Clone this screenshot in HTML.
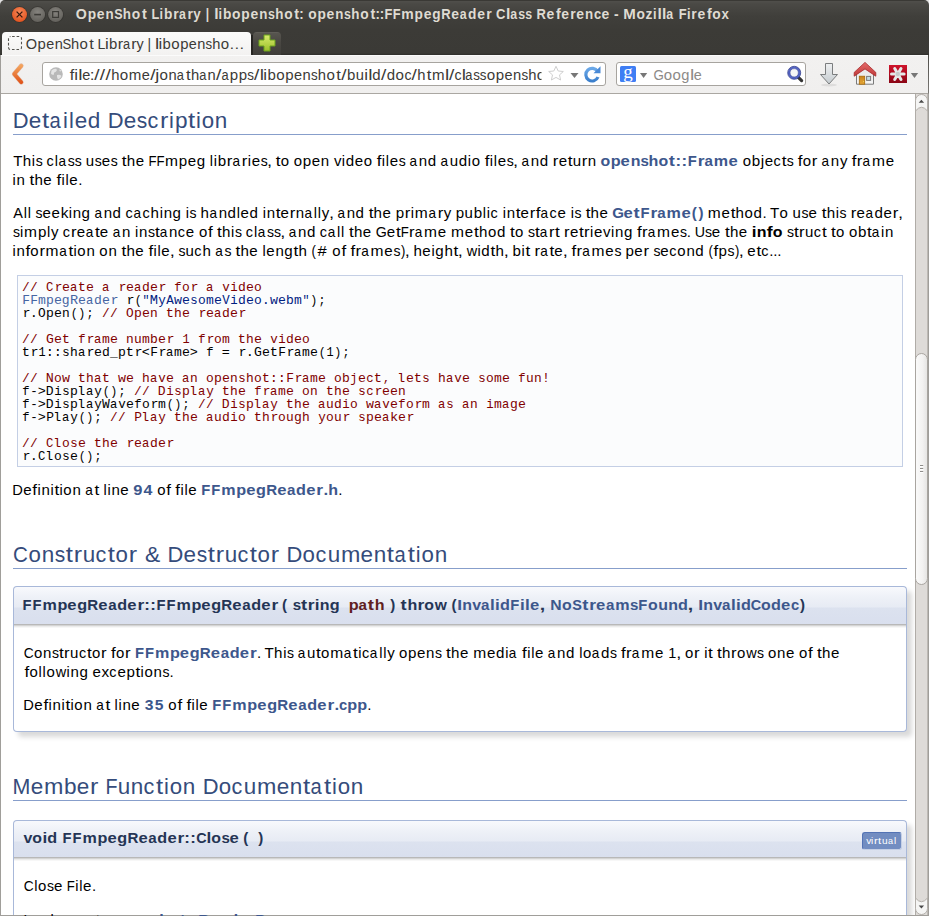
<!DOCTYPE html>
<html><head><meta charset="utf-8">
<title>OpenShot Library | libopenshot: openshot::FFmpegReader Class Reference</title>
<style>
html,body{margin:0;padding:0;width:929px;height:916px;overflow:hidden;background:#e2e2e2;}
#content{left:1px;top:94px;width:914px;height:821px;background:#fff;}
body{position:relative;font-family:"Liberation Sans",sans-serif;}
.abs{position:absolute;}
#titlebar{left:0;top:0;width:929px;height:56px;background:linear-gradient(#3a3935 0,#3a3935 1px,#504f4b 1px,#4a4945 4px,#403f3b 16px,#3c3b37 30px,#3b3a36 53px,#2f2e2b 55px);border-radius:5px 5px 0 0;}
#tab{left:2px;top:32px;width:248.5px;height:24px;background:linear-gradient(#fbfbfa,#f2f1f0);border-radius:4px 4px 0 0;}
#newtab{left:253px;top:32px;width:28px;height:23px;background:linear-gradient(#67655f 0,#57554f 1px,#4a4843 45%,#3f3e3a);border-radius:4px 4px 0 0;}
#tabsep{left:250.5px;top:35px;width:2px;height:20px;background:#262522;border-radius:0 0 0 2px;}
#navbar{left:0;top:55px;width:929px;height:38px;background:linear-gradient(#fbfbfb 0,#fbfbfb 1px,#f2f1f0 1px,#f0efee 38px);}
#navline{left:0;top:93px;width:929px;height:1px;background:#aaa7a2;}
#url{left:42px;top:62px;width:562px;height:22px;background:#fff;border:1px solid #a7a49f;border-radius:3px;overflow:hidden;}
#search{left:616px;top:62px;width:188px;height:22px;background:#fff;border:1px solid #a7a49f;border-radius:3px;}
#leftborder{left:0;top:55px;width:1px;height:861px;background:#a09e9a;}
#rightborder{left:928px;top:55px;width:1px;height:861px;background:linear-gradient(#4e4d49 0,#7a7874 38px,#a09e9a 39px);}
#bottomborder{left:0;top:915px;width:929px;height:1px;background:#a09e9a;}
#sbtrack{left:915px;top:94px;width:13px;height:821px;background:#dedbd8;border-left:1px solid #aeaaa5;}
.h2line{position:absolute;left:13px;width:894px;height:1px;background:#879ecb;}
#frag{left:17px;top:275px;width:884px;height:190px;background:#fbfcfd;border:1px solid #c4cfe5;}
.memproto{position:absolute;left:13px;width:892px;border:1px solid #a8b8d9;border-bottom:none;border-radius:4px 4px 0 0;
 background:linear-gradient(#f8f9fc 0px,#eef1f7 10px,#e7ebf4 20px,#dce2ef 21px,#d9dfee 37px);box-shadow:5px 5px 5px rgba(0,0,0,0.15);}
.pshadow{position:absolute;left:14px;width:892px;height:4px;background:linear-gradient(rgba(0,0,0,0.28) 0px,rgba(0,0,0,0.28) 1px,rgba(0,0,0,0.17) 1px,rgba(0,0,0,0.17) 2px,rgba(0,0,0,0.08) 2px,rgba(0,0,0,0.08) 3px,rgba(0,0,0,0.03) 3px,rgba(0,0,0,0.03) 4px);}
.memdoc{position:absolute;left:13px;width:892px;border:1px solid #a8b8d9;border-top:none;border-radius:0 0 4px 4px;
 background:#fff;box-shadow:5px 5px 5px rgba(0,0,0,0.15);}
#overlay{position:absolute;left:0;top:0;}
</style></head><body>
<div id="content" class="abs"></div>
<div id="titlebar" class="abs"></div>
<div id="tab" class="abs"></div>
<div id="newtab" class="abs"></div>
<div id="tabsep" class="abs"></div>
<div id="navbar" class="abs"></div>
<div id="navline" class="abs"></div>
<div id="url" class="abs"></div>
<div id="search" class="abs"></div>
<div id="sbtrack" class="abs"></div>
<div class="h2line" style="top:134px"></div>
<div id="frag" class="abs"></div>
<div class="h2line" style="top:568px"></div>
<div class="memproto" style="top:586px;height:37px"></div>
<div class="memdoc" style="top:624px;height:107px"></div>
<div class="pshadow" style="top:624px"></div>
<div class="h2line" style="top:800px"></div>
<div class="memproto" style="top:820px;height:36px"></div>
<div class="memdoc" style="top:857px;height:100px"></div>
<div class="pshadow" style="top:857px"></div>
<div class="abs" style="left:862px;top:832px;width:38px;height:15.5px;background:#728dc1;border-top:1px solid #5373b4;border-left:1px solid #5373b4;border-right:1px solid #c4cfe5;border-bottom:1px solid #c4cfe5;border-radius:3px;"></div>
<div id="leftborder" class="abs"></div>
<div id="rightborder" class="abs"></div>
<div id="bottomborder" class="abs"></div>

<svg id="overlay" width="929" height="916" viewBox="0 0 929 916">
<defs>
 <radialGradient id="gClose" cx="50%" cy="35%" r="65%"><stop offset="0" stop-color="#f7895a"/><stop offset="1" stop-color="#e2531f"/></radialGradient>
 <radialGradient id="gGray" cx="50%" cy="35%" r="65%"><stop offset="0" stop-color="#85837e"/><stop offset="1" stop-color="#62605b"/></radialGradient>
 <linearGradient id="gPlus" x1="0" y1="0" x2="0" y2="1"><stop offset="0" stop-color="#d9ec6e"/><stop offset="1" stop-color="#9cbf2a"/></linearGradient>
 <linearGradient id="gBack" x1="0" y1="0" x2="0" y2="1"><stop offset="0" stop-color="#f3a35c"/><stop offset="1" stop-color="#e0561c"/></linearGradient>
 <linearGradient id="gReload" x1="0" y1="0" x2="0" y2="1"><stop offset="0" stop-color="#6aa8e8"/><stop offset="1" stop-color="#3b7fcc"/></linearGradient>
 <linearGradient id="gArrow" x1="0" y1="0" x2="0" y2="1"><stop offset="0" stop-color="#eef0f1"/><stop offset="1" stop-color="#c5cbcf"/></linearGradient>
 <linearGradient id="gRed" x1="0" y1="0" x2="0" y2="1"><stop offset="0" stop-color="#d0142c"/><stop offset="1" stop-color="#8a0414"/></linearGradient>
 <linearGradient id="gRoof" x1="0" y1="0" x2="0" y2="1"><stop offset="0" stop-color="#e46a6a"/><stop offset="1" stop-color="#c03a3a"/></linearGradient>
</defs>
<!-- window buttons -->
<circle cx="19.5" cy="14.5" r="8.3" fill="#2e2d2a" opacity="0.6"/>
<circle cx="19.5" cy="14.5" r="7.5" fill="url(#gClose)"/>
<path d="M16.6 11.6 L22.4 17.4 M22.4 11.6 L16.6 17.4" stroke="#3a1a0e" stroke-width="1.3"/>
<circle cx="37.6" cy="14.5" r="8.3" fill="#2e2d2a" opacity="0.6"/>
<circle cx="37.6" cy="14.5" r="7.5" fill="url(#gGray)"/>
<rect x="34.2" y="13.8" width="6.8" height="1.6" fill="#3c3b37"/>
<circle cx="55.6" cy="14.5" r="8.3" fill="#2e2d2a" opacity="0.6"/>
<circle cx="55.6" cy="14.5" r="7.5" fill="url(#gGray)"/>
<rect x="52.7" y="11.6" width="5.8" height="5.8" fill="none" stroke="#3c3b37" stroke-width="1.2"/>
<!-- tab icon: dashed square -->
<rect x="8.5" y="36.5" width="13" height="13" rx="2" fill="none" stroke="#55544f" stroke-width="1.1" stroke-dasharray="2.6 1.9" stroke-dashoffset="-1.6"/>
<!-- new tab plus -->
<path d="M264 35 h6 v5 h5 v6 h-5 v5 h-6 v-5 h-5 v-6 h5 z" fill="url(#gPlus)" stroke="#6aa21c" stroke-width="1"/>
<!-- back chevron -->
<path d="M21.3 65.8 L14.2 74 L21.3 82.2" fill="none" stroke="#c9561e" stroke-opacity="0.35" stroke-width="4.6" stroke-linecap="round" stroke-linejoin="round"/><path d="M21.3 65.8 L14.2 74 L21.3 82.2" fill="none" stroke="url(#gBack)" stroke-width="3.6" stroke-linecap="round" stroke-linejoin="round"/>
<!-- globe -->
<circle cx="56" cy="74" r="6.8" fill="#b9b9b9"/>
<path d="M51.5 70.5 q2.5-2.5 5-1.5 q1 2 -1 3 q-2 0 -1.5 2.5 q-2 1 -3 -1z M57 75 q3 -1 4.5 1 q-1 3 -3.5 3.5 q-1.5-2 -1-4.5z M59 69.5 q1.5 0 2.5 1.5 l-1.5 0.5z" fill="#e4e4e4"/>
<!-- star -->
<path d="M556 66.3 L558.2 71 L563.3 71.5 L559.5 74.9 L560.6 80 L556 77.4 L551.4 80 L552.5 74.9 L548.7 71.5 L553.8 71 Z" fill="#fff" stroke="#cfcfcf" stroke-width="1"/>
<!-- dropdown url -->
<path d="M570.5 73 h8 l-4 5 z" fill="#777"/>
<!-- reload -->
<path d="M597.6 71.5 A6.3 6.3 0 1 0 598 77" fill="none" stroke="url(#gReload)" stroke-width="3.2"/>
<path d="M600.5 66.2 L600.5 73.2 L593.5 73.2 Z" fill="#4a8ad6"/>
<!-- google icon -->
<rect x="620" y="66" width="16" height="16" rx="1.5" fill="#3f7ef4"/>
<text x="628" y="77.5" font-family="Liberation Serif" font-size="19" fill="#fff" text-anchor="middle">g</text>
<path d="M640 73 h7.2 l-3.6 5 z" fill="#777"/>
<!-- magnifier -->
<line x1="797.8" y1="76.8" x2="801.6" y2="80.6" stroke="#333" stroke-width="3.2" stroke-linecap="round"/>
<circle cx="794.2" cy="72.8" r="5.3" fill="#f6f6f6" stroke="#5565c4" stroke-width="2.2"/>
<circle cx="794.2" cy="72.8" r="6.5" fill="none" stroke="#2e3a8c" stroke-width="0.8"/>
<circle cx="794.2" cy="72.8" r="4.1" fill="none" stroke="#2e3a8c" stroke-width="0.5"/>
<!-- download arrow -->
<ellipse cx="829" cy="85" rx="8" ry="1.5" fill="#000" opacity="0.08"/>
<path d="M825.5 63.5 h7 v11 h5 l-8.5 9.5 l-8.5 -9.5 h5 z" fill="url(#gArrow)" stroke="#7b7d7e" stroke-width="1"/>
<!-- home -->
<defs><linearGradient id="gDoor" x1="0" y1="0" x2="0" y2="1"><stop offset="0" stop-color="#c8821a"/><stop offset="1" stop-color="#e6a83a"/></linearGradient>
<linearGradient id="gBody" x1="0" y1="0" x2="0" y2="1"><stop offset="0" stop-color="#e4e4e4"/><stop offset="1" stop-color="#f6f6f6"/></linearGradient></defs>
<path d="M856.5 73 L865 66 L873.5 73 L873.5 84.2 L856.5 84.2 Z" fill="url(#gBody)" stroke="#7a7a7a" stroke-width="1"/>
<rect x="859.3" y="76.2" width="5.4" height="8" fill="url(#gDoor)" stroke="#a86a08" stroke-width="0.8"/>
<circle cx="863.5" cy="81.5" r="0.5" fill="#f0e060"/>
<rect x="866.6" y="76.4" width="4" height="4" fill="#c4dce4" stroke="#7a7a7a" stroke-width="1"/>
<path d="M854.2 72.4 L865 62.4 L875.8 72.4 L875.8 76.2 L865 68.9 L854.2 76.2 Z" fill="url(#gRoof)" stroke="#a82828" stroke-width="0.8" stroke-linejoin="round"/>
<!-- red addon -->
<rect x="889" y="65" width="18" height="18" fill="url(#gRed)"/>
<path d="M891.5 74 h12.6 M894.7 68.5 l6.3 11 M901 68.5 l-6.3 11" stroke="#e6eaea" stroke-width="3" stroke-linecap="round"/><circle cx="897.8" cy="74" r="2.2" fill="#c8cccc"/>
<path d="M910.8 73 h7.4 l-3.7 5 z" fill="#777"/>
<!-- scrollbar -->
<defs>
 <linearGradient id="gThumb" x1="0" y1="0" x2="1" y2="0"><stop offset="0" stop-color="#fafafa"/><stop offset="0.6" stop-color="#f3f2f1"/><stop offset="1" stop-color="#e4e3e1"/></linearGradient>
</defs>
<rect x="915" y="94" width="13" height="821" fill="#dedbd8"/>
<rect x="915" y="94" width="1" height="821" fill="#b0aca7"/>
<rect x="927" y="94" width="1" height="821" fill="#bdb9b4"/>
<path d="M915.5 111 L915.5 100.5 A6 6 0 0 1 927.5 100.5 L927.5 111 Q921.5 103.5 915.5 111 Z" fill="#f5f5f4" stroke="#b3afaa" stroke-width="1"/>
<path d="M918.7 102.8 L921.4 99.8 L924.1 102.8 Z" fill="#4a4a4a"/>
<path d="M915.5 898 L915.5 908.5 A6 6 0 0 0 927.5 908.5 L927.5 898 Q921.5 905.5 915.5 898 Z" fill="#f5f5f4" stroke="#b3afaa" stroke-width="1"/>
<path d="M918.7 905.5 L921.4 908.5 L924.1 905.5 Z" fill="#4a4a4a"/>
<rect x="915.5" y="353.5" width="12" height="231" rx="6" ry="6" fill="url(#gThumb)" stroke="#a9a5a0" stroke-width="1"/>
<rect x="920" y="465" width="3.2" height="1" fill="#8f8d8a"/>
<rect x="920" y="466" width="3.2" height="1" fill="#ffffff"/>
<rect x="920" y="468" width="3.2" height="1" fill="#8f8d8a"/>
<rect x="920" y="469" width="3.2" height="1" fill="#ffffff"/>
<rect x="920" y="471" width="3.2" height="1" fill="#8f8d8a"/>
<rect x="920" y="472" width="3.2" height="1" fill="#ffffff"/>

<text y="19.15" font-family="Liberation Sans" font-size="15.0" font-weight="bold" fill="#dfdbd2"><tspan x="75.73" textLength="11.04" lengthAdjust="spacingAndGlyphs">O</tspan><tspan x="87.69" textLength="8.39" lengthAdjust="spacingAndGlyphs">p</tspan><tspan x="96.86" textLength="7.76" lengthAdjust="spacingAndGlyphs">e</tspan><tspan x="105.59" textLength="8.17" lengthAdjust="spacingAndGlyphs">n</tspan><tspan x="114.16" textLength="8.40" lengthAdjust="spacingAndGlyphs">S</tspan><tspan x="122.86" textLength="8.20" lengthAdjust="spacingAndGlyphs">h</tspan><tspan x="131.86" textLength="8.42" lengthAdjust="spacingAndGlyphs">o</tspan><tspan x="141.96" textLength="4.81" lengthAdjust="spacingAndGlyphs">t</tspan> <tspan x="151.55" textLength="7.83" lengthAdjust="spacingAndGlyphs">L</tspan><tspan x="159.60" textLength="3.53" lengthAdjust="spacingAndGlyphs">i</tspan><tspan x="163.94" textLength="8.39" lengthAdjust="spacingAndGlyphs">b</tspan><tspan x="173.23" textLength="5.46" lengthAdjust="spacingAndGlyphs">r</tspan><tspan x="179.10" textLength="6.87" lengthAdjust="spacingAndGlyphs">a</tspan><tspan x="187.62" textLength="5.46" lengthAdjust="spacingAndGlyphs">r</tspan><tspan x="193.26" textLength="7.44" lengthAdjust="spacingAndGlyphs">y</tspan> <tspan x="205.66" textLength="3.36" lengthAdjust="spacingAndGlyphs">|</tspan> <tspan x="214.19" textLength="4.34" lengthAdjust="spacingAndGlyphs">l</tspan><tspan x="218.58" textLength="3.53" lengthAdjust="spacingAndGlyphs">i</tspan><tspan x="222.92" textLength="8.39" lengthAdjust="spacingAndGlyphs">b</tspan><tspan x="232.05" textLength="8.42" lengthAdjust="spacingAndGlyphs">o</tspan><tspan x="241.32" textLength="8.39" lengthAdjust="spacingAndGlyphs">p</tspan><tspan x="250.49" textLength="7.76" lengthAdjust="spacingAndGlyphs">e</tspan><tspan x="259.22" textLength="8.17" lengthAdjust="spacingAndGlyphs">n</tspan><tspan x="267.88" textLength="6.91" lengthAdjust="spacingAndGlyphs">s</tspan><tspan x="275.19" textLength="8.20" lengthAdjust="spacingAndGlyphs">h</tspan><tspan x="284.19" textLength="8.42" lengthAdjust="spacingAndGlyphs">o</tspan><tspan x="294.29" textLength="4.81" lengthAdjust="spacingAndGlyphs">t</tspan><tspan x="299.35" textLength="4.43" lengthAdjust="spacingAndGlyphs">:</tspan> <tspan x="308.14" textLength="8.42" lengthAdjust="spacingAndGlyphs">o</tspan><tspan x="317.41" textLength="8.39" lengthAdjust="spacingAndGlyphs">p</tspan><tspan x="326.58" textLength="7.76" lengthAdjust="spacingAndGlyphs">e</tspan><tspan x="335.31" textLength="8.17" lengthAdjust="spacingAndGlyphs">n</tspan><tspan x="343.97" textLength="6.91" lengthAdjust="spacingAndGlyphs">s</tspan><tspan x="351.28" textLength="8.20" lengthAdjust="spacingAndGlyphs">h</tspan><tspan x="360.28" textLength="8.42" lengthAdjust="spacingAndGlyphs">o</tspan><tspan x="370.38" textLength="4.81" lengthAdjust="spacingAndGlyphs">t</tspan><tspan x="375.44" textLength="4.43" lengthAdjust="spacingAndGlyphs">:</tspan><tspan x="379.73" textLength="4.43" lengthAdjust="spacingAndGlyphs">:</tspan><tspan x="384.52" textLength="7.89" lengthAdjust="spacingAndGlyphs">F</tspan><tspan x="392.86" textLength="7.89" lengthAdjust="spacingAndGlyphs">F</tspan><tspan x="401.18" textLength="12.46" lengthAdjust="spacingAndGlyphs">m</tspan><tspan x="414.47" textLength="8.39" lengthAdjust="spacingAndGlyphs">p</tspan><tspan x="423.64" textLength="7.76" lengthAdjust="spacingAndGlyphs">e</tspan><tspan x="432.28" textLength="8.28" lengthAdjust="spacingAndGlyphs">g</tspan><tspan x="441.35" textLength="9.39" lengthAdjust="spacingAndGlyphs">R</tspan><tspan x="451.19" textLength="7.76" lengthAdjust="spacingAndGlyphs">e</tspan><tspan x="459.70" textLength="6.87" lengthAdjust="spacingAndGlyphs">a</tspan><tspan x="468.03" textLength="8.38" lengthAdjust="spacingAndGlyphs">d</tspan><tspan x="477.29" textLength="7.76" lengthAdjust="spacingAndGlyphs">e</tspan><tspan x="486.14" textLength="5.46" lengthAdjust="spacingAndGlyphs">r</tspan> <tspan x="496.12" textLength="9.38" lengthAdjust="spacingAndGlyphs">C</tspan><tspan x="505.95" textLength="4.34" lengthAdjust="spacingAndGlyphs">l</tspan><tspan x="510.18" textLength="6.87" lengthAdjust="spacingAndGlyphs">a</tspan><tspan x="518.23" textLength="6.91" lengthAdjust="spacingAndGlyphs">s</tspan><tspan x="525.25" textLength="6.91" lengthAdjust="spacingAndGlyphs">s</tspan> <tspan x="536.57" textLength="9.39" lengthAdjust="spacingAndGlyphs">R</tspan><tspan x="546.41" textLength="7.76" lengthAdjust="spacingAndGlyphs">e</tspan><tspan x="555.96" textLength="4.74" lengthAdjust="spacingAndGlyphs">f</tspan><tspan x="561.37" textLength="7.76" lengthAdjust="spacingAndGlyphs">e</tspan><tspan x="570.22" textLength="5.46" lengthAdjust="spacingAndGlyphs">r</tspan><tspan x="576.31" textLength="7.76" lengthAdjust="spacingAndGlyphs">e</tspan><tspan x="585.04" textLength="8.17" lengthAdjust="spacingAndGlyphs">n</tspan><tspan x="593.91" textLength="7.18" lengthAdjust="spacingAndGlyphs">c</tspan><tspan x="601.50" textLength="7.76" lengthAdjust="spacingAndGlyphs">e</tspan> <tspan x="613.97" textLength="4.66" lengthAdjust="spacingAndGlyphs">-</tspan> <tspan x="623.19" textLength="12.51" lengthAdjust="spacingAndGlyphs">M</tspan><tspan x="636.50" textLength="8.42" lengthAdjust="spacingAndGlyphs">o</tspan><tspan x="645.51" textLength="6.94" lengthAdjust="spacingAndGlyphs">z</tspan><tspan x="653.07" textLength="3.53" lengthAdjust="spacingAndGlyphs">i</tspan><tspan x="657.44" textLength="4.34" lengthAdjust="spacingAndGlyphs">l</tspan><tspan x="661.96" textLength="4.34" lengthAdjust="spacingAndGlyphs">l</tspan><tspan x="666.19" textLength="6.87" lengthAdjust="spacingAndGlyphs">a</tspan> <tspan x="678.63" textLength="7.89" lengthAdjust="spacingAndGlyphs">F</tspan><tspan x="686.91" textLength="3.53" lengthAdjust="spacingAndGlyphs">i</tspan><tspan x="691.34" textLength="5.46" lengthAdjust="spacingAndGlyphs">r</tspan><tspan x="697.43" textLength="7.76" lengthAdjust="spacingAndGlyphs">e</tspan><tspan x="706.98" textLength="4.74" lengthAdjust="spacingAndGlyphs">f</tspan><tspan x="712.36" textLength="8.42" lengthAdjust="spacingAndGlyphs">o</tspan><tspan x="721.51" textLength="7.38" lengthAdjust="spacingAndGlyphs">x</tspan></text>
<text y="48.65" font-family="Liberation Sans" font-size="14.75" fill="#3c3b37"><tspan x="25.84" textLength="11.34" lengthAdjust="spacingAndGlyphs">O</tspan><tspan x="37.63" textLength="8.30" lengthAdjust="spacingAndGlyphs">p</tspan><tspan x="46.22" textLength="8.02" lengthAdjust="spacingAndGlyphs">e</tspan><tspan x="54.63" textLength="8.13" lengthAdjust="spacingAndGlyphs">n</tspan><tspan x="62.51" textLength="8.71" lengthAdjust="spacingAndGlyphs">S</tspan><tspan x="71.02" textLength="8.17" lengthAdjust="spacingAndGlyphs">h</tspan><tspan x="79.57" textLength="8.37" lengthAdjust="spacingAndGlyphs">o</tspan><tspan x="89.23" textLength="4.58" lengthAdjust="spacingAndGlyphs">t</tspan> <tspan x="97.54" textLength="7.88" lengthAdjust="spacingAndGlyphs">L</tspan><tspan x="105.08" textLength="3.74" lengthAdjust="spacingAndGlyphs">i</tspan><tspan x="109.06" textLength="8.30" lengthAdjust="spacingAndGlyphs">b</tspan><tspan x="117.82" textLength="5.39" lengthAdjust="spacingAndGlyphs">r</tspan><tspan x="123.01" textLength="7.10" lengthAdjust="spacingAndGlyphs">a</tspan><tspan x="131.22" textLength="5.39" lengthAdjust="spacingAndGlyphs">r</tspan><tspan x="136.49" textLength="7.16" lengthAdjust="spacingAndGlyphs">y</tspan> <tspan x="147.49" textLength="3.60" lengthAdjust="spacingAndGlyphs">|</tspan> <tspan x="155.00" textLength="4.26" lengthAdjust="spacingAndGlyphs">l</tspan><tspan x="158.64" textLength="3.74" lengthAdjust="spacingAndGlyphs">i</tspan><tspan x="162.62" textLength="8.30" lengthAdjust="spacingAndGlyphs">b</tspan><tspan x="171.30" textLength="8.37" lengthAdjust="spacingAndGlyphs">o</tspan><tspan x="180.17" textLength="8.30" lengthAdjust="spacingAndGlyphs">p</tspan><tspan x="188.77" textLength="8.02" lengthAdjust="spacingAndGlyphs">e</tspan><tspan x="197.18" textLength="8.13" lengthAdjust="spacingAndGlyphs">n</tspan><tspan x="205.48" textLength="6.63" lengthAdjust="spacingAndGlyphs">s</tspan><tspan x="212.21" textLength="8.17" lengthAdjust="spacingAndGlyphs">h</tspan><tspan x="220.77" textLength="8.37" lengthAdjust="spacingAndGlyphs">o</tspan><tspan x="228.98" textLength="15.68" lengthAdjust="spacingAndGlyphs">…</tspan></text>
<defs><clipPath id="urlclip"><rect x="60" y="60" width="481.5" height="30"/></clipPath></defs><g clip-path="url(#urlclip)">
<text y="79.65" font-family="Liberation Sans" font-size="14.75" fill="#3c3b37"><tspan x="69.70" textLength="4.54" lengthAdjust="spacingAndGlyphs">f</tspan><tspan x="74.30" textLength="3.77" lengthAdjust="spacingAndGlyphs">i</tspan><tspan x="78.30" textLength="4.26" lengthAdjust="spacingAndGlyphs">l</tspan><tspan x="82.15" textLength="8.09" lengthAdjust="spacingAndGlyphs">e</tspan><tspan x="89.88" textLength="4.80" lengthAdjust="spacingAndGlyphs">:</tspan><tspan x="94.29" textLength="5.33" lengthAdjust="spacingAndGlyphs">/</tspan><tspan x="99.89" textLength="5.33" lengthAdjust="spacingAndGlyphs">/</tspan><tspan x="105.49" textLength="5.33" lengthAdjust="spacingAndGlyphs">/</tspan><tspan x="111.19" textLength="8.24" lengthAdjust="spacingAndGlyphs">h</tspan><tspan x="119.87" textLength="8.44" lengthAdjust="spacingAndGlyphs">o</tspan><tspan x="128.87" textLength="12.57" lengthAdjust="spacingAndGlyphs">m</tspan><tspan x="141.83" textLength="8.09" lengthAdjust="spacingAndGlyphs">e</tspan><tspan x="150.22" textLength="5.33" lengthAdjust="spacingAndGlyphs">/</tspan><tspan x="155.35" textLength="4.03" lengthAdjust="spacingAndGlyphs">j</tspan><tspan x="159.61" textLength="8.44" lengthAdjust="spacingAndGlyphs">o</tspan><tspan x="168.57" textLength="8.20" lengthAdjust="spacingAndGlyphs">n</tspan><tspan x="176.80" textLength="7.16" lengthAdjust="spacingAndGlyphs">a</tspan><tspan x="185.92" textLength="4.63" lengthAdjust="spacingAndGlyphs">t</tspan><tspan x="191.02" textLength="8.24" lengthAdjust="spacingAndGlyphs">h</tspan><tspan x="199.30" textLength="7.16" lengthAdjust="spacingAndGlyphs">a</tspan><tspan x="207.58" textLength="8.20" lengthAdjust="spacingAndGlyphs">n</tspan><tspan x="216.12" textLength="5.33" lengthAdjust="spacingAndGlyphs">/</tspan><tspan x="221.41" textLength="7.16" lengthAdjust="spacingAndGlyphs">a</tspan><tspan x="229.74" textLength="8.37" lengthAdjust="spacingAndGlyphs">p</tspan><tspan x="238.65" textLength="8.37" lengthAdjust="spacingAndGlyphs">p</tspan><tspan x="247.23" textLength="6.69" lengthAdjust="spacingAndGlyphs">s</tspan><tspan x="253.96" textLength="5.33" lengthAdjust="spacingAndGlyphs">/</tspan><tspan x="259.71" textLength="4.26" lengthAdjust="spacingAndGlyphs">l</tspan><tspan x="263.39" textLength="3.77" lengthAdjust="spacingAndGlyphs">i</tspan><tspan x="267.44" textLength="8.37" lengthAdjust="spacingAndGlyphs">b</tspan><tspan x="276.25" textLength="8.44" lengthAdjust="spacingAndGlyphs">o</tspan><tspan x="285.25" textLength="8.37" lengthAdjust="spacingAndGlyphs">p</tspan><tspan x="293.97" textLength="8.09" lengthAdjust="spacingAndGlyphs">e</tspan><tspan x="302.50" textLength="8.20" lengthAdjust="spacingAndGlyphs">n</tspan><tspan x="310.93" textLength="6.69" lengthAdjust="spacingAndGlyphs">s</tspan><tspan x="317.76" textLength="8.24" lengthAdjust="spacingAndGlyphs">h</tspan><tspan x="326.44" textLength="8.44" lengthAdjust="spacingAndGlyphs">o</tspan><tspan x="336.23" textLength="4.63" lengthAdjust="spacingAndGlyphs">t</tspan><tspan x="341.23" textLength="5.33" lengthAdjust="spacingAndGlyphs">/</tspan><tspan x="347.03" textLength="8.37" lengthAdjust="spacingAndGlyphs">b</tspan><tspan x="355.81" textLength="8.20" lengthAdjust="spacingAndGlyphs">u</tspan><tspan x="364.27" textLength="3.77" lengthAdjust="spacingAndGlyphs">i</tspan><tspan x="368.28" textLength="4.26" lengthAdjust="spacingAndGlyphs">l</tspan><tspan x="372.19" textLength="8.36" lengthAdjust="spacingAndGlyphs">d</tspan><tspan x="381.02" textLength="5.33" lengthAdjust="spacingAndGlyphs">/</tspan><tspan x="386.69" textLength="8.36" lengthAdjust="spacingAndGlyphs">d</tspan><tspan x="395.62" textLength="8.44" lengthAdjust="spacingAndGlyphs">o</tspan><tspan x="404.40" textLength="7.08" lengthAdjust="spacingAndGlyphs">c</tspan><tspan x="411.50" textLength="5.33" lengthAdjust="spacingAndGlyphs">/</tspan><tspan x="417.21" textLength="8.24" lengthAdjust="spacingAndGlyphs">h</tspan><tspan x="426.77" textLength="4.63" lengthAdjust="spacingAndGlyphs">t</tspan><tspan x="431.96" textLength="12.57" lengthAdjust="spacingAndGlyphs">m</tspan><tspan x="445.06" textLength="4.26" lengthAdjust="spacingAndGlyphs">l</tspan><tspan x="448.90" textLength="5.33" lengthAdjust="spacingAndGlyphs">/</tspan><tspan x="454.48" textLength="7.08" lengthAdjust="spacingAndGlyphs">c</tspan><tspan x="461.73" textLength="4.26" lengthAdjust="spacingAndGlyphs">l</tspan><tspan x="465.25" textLength="7.16" lengthAdjust="spacingAndGlyphs">a</tspan><tspan x="473.27" textLength="6.69" lengthAdjust="spacingAndGlyphs">s</tspan><tspan x="479.87" textLength="6.69" lengthAdjust="spacingAndGlyphs">s</tspan><tspan x="486.69" textLength="8.44" lengthAdjust="spacingAndGlyphs">o</tspan><tspan x="495.70" textLength="8.37" lengthAdjust="spacingAndGlyphs">p</tspan><tspan x="504.42" textLength="8.09" lengthAdjust="spacingAndGlyphs">e</tspan><tspan x="512.95" textLength="8.20" lengthAdjust="spacingAndGlyphs">n</tspan><tspan x="521.38" textLength="6.69" lengthAdjust="spacingAndGlyphs">s</tspan><tspan x="528.21" textLength="8.24" lengthAdjust="spacingAndGlyphs">h</tspan><tspan x="536.89" textLength="8.44" lengthAdjust="spacingAndGlyphs">o</tspan><tspan x="546.68" textLength="4.63" lengthAdjust="spacingAndGlyphs">t</tspan><tspan x="551.48" textLength="7.67" lengthAdjust="spacingAndGlyphs">_</tspan><tspan x="559.09" textLength="6.56" lengthAdjust="spacingAndGlyphs">1</tspan><tspan x="567.53" textLength="7.67" lengthAdjust="spacingAndGlyphs">_</tspan><tspan x="575.15" textLength="6.56" lengthAdjust="spacingAndGlyphs">1</tspan></text>
</g>
<text y="80.15" font-family="Liberation Sans" font-size="14.75" fill="#8c8a87"><tspan x="653.49" textLength="10.36" lengthAdjust="spacingAndGlyphs">G</tspan><tspan x="663.73" textLength="8.37" lengthAdjust="spacingAndGlyphs">o</tspan><tspan x="672.51" textLength="8.37" lengthAdjust="spacingAndGlyphs">o</tspan><tspan x="681.24" textLength="8.18" lengthAdjust="spacingAndGlyphs">g</tspan><tspan x="689.96" textLength="4.26" lengthAdjust="spacingAndGlyphs">l</tspan><tspan x="693.76" textLength="8.02" lengthAdjust="spacingAndGlyphs">e</tspan></text>
<text y="127.75" font-family="Liberation Sans" font-size="22" fill="#354c7b"><tspan x="12.64" textLength="15.83" lengthAdjust="spacingAndGlyphs">D</tspan><tspan x="28.69" textLength="12.51" lengthAdjust="spacingAndGlyphs">e</tspan><tspan x="41.91" textLength="7.15" lengthAdjust="spacingAndGlyphs">t</tspan><tspan x="49.50" textLength="11.24" lengthAdjust="spacingAndGlyphs">a</tspan><tspan x="62.95" textLength="4.84" lengthAdjust="spacingAndGlyphs">i</tspan><tspan x="68.94" textLength="4.84" lengthAdjust="spacingAndGlyphs">l</tspan><tspan x="74.69" textLength="12.51" lengthAdjust="spacingAndGlyphs">e</tspan><tspan x="87.70" textLength="12.56" lengthAdjust="spacingAndGlyphs">d</tspan> <tspan x="107.64" textLength="15.83" lengthAdjust="spacingAndGlyphs">D</tspan><tspan x="123.69" textLength="12.51" lengthAdjust="spacingAndGlyphs">e</tspan><tspan x="136.81" textLength="10.48" lengthAdjust="spacingAndGlyphs">s</tspan><tspan x="147.58" textLength="10.77" lengthAdjust="spacingAndGlyphs">c</tspan><tspan x="159.92" textLength="8.34" lengthAdjust="spacingAndGlyphs">r</tspan><tspan x="168.95" textLength="4.84" lengthAdjust="spacingAndGlyphs">i</tspan><tspan x="174.95" textLength="12.57" lengthAdjust="spacingAndGlyphs">p</tspan><tspan x="187.91" textLength="7.15" lengthAdjust="spacingAndGlyphs">t</tspan><tspan x="195.95" textLength="4.84" lengthAdjust="spacingAndGlyphs">i</tspan><tspan x="201.67" textLength="12.39" lengthAdjust="spacingAndGlyphs">o</tspan><tspan x="214.89" textLength="12.50" lengthAdjust="spacingAndGlyphs">n</tspan></text>
<text y="562.15" font-family="Liberation Sans" font-size="22" fill="#354c7b"><tspan x="13.11" textLength="14.87" lengthAdjust="spacingAndGlyphs">C</tspan><tspan x="28.55" textLength="12.39" lengthAdjust="spacingAndGlyphs">o</tspan><tspan x="41.77" textLength="12.50" lengthAdjust="spacingAndGlyphs">n</tspan><tspan x="54.69" textLength="10.48" lengthAdjust="spacingAndGlyphs">s</tspan><tspan x="65.79" textLength="7.15" lengthAdjust="spacingAndGlyphs">t</tspan><tspan x="73.80" textLength="8.34" lengthAdjust="spacingAndGlyphs">r</tspan><tspan x="82.68" textLength="12.50" lengthAdjust="spacingAndGlyphs">u</tspan><tspan x="95.47" textLength="10.77" lengthAdjust="spacingAndGlyphs">c</tspan><tspan x="107.79" textLength="7.15" lengthAdjust="spacingAndGlyphs">t</tspan><tspan x="115.55" textLength="12.39" lengthAdjust="spacingAndGlyphs">o</tspan><tspan x="128.80" textLength="8.34" lengthAdjust="spacingAndGlyphs">r</tspan> <tspan x="144.98" textLength="15.28" lengthAdjust="spacingAndGlyphs">&amp;</tspan> <tspan x="167.52" textLength="15.83" lengthAdjust="spacingAndGlyphs">D</tspan><tspan x="183.57" textLength="12.51" lengthAdjust="spacingAndGlyphs">e</tspan><tspan x="196.69" textLength="10.48" lengthAdjust="spacingAndGlyphs">s</tspan><tspan x="207.79" textLength="7.15" lengthAdjust="spacingAndGlyphs">t</tspan><tspan x="215.80" textLength="8.34" lengthAdjust="spacingAndGlyphs">r</tspan><tspan x="224.68" textLength="12.50" lengthAdjust="spacingAndGlyphs">u</tspan><tspan x="237.47" textLength="10.77" lengthAdjust="spacingAndGlyphs">c</tspan><tspan x="249.79" textLength="7.15" lengthAdjust="spacingAndGlyphs">t</tspan><tspan x="257.55" textLength="12.39" lengthAdjust="spacingAndGlyphs">o</tspan><tspan x="270.80" textLength="8.34" lengthAdjust="spacingAndGlyphs">r</tspan> <tspan x="286.52" textLength="15.83" lengthAdjust="spacingAndGlyphs">D</tspan><tspan x="302.55" textLength="12.39" lengthAdjust="spacingAndGlyphs">o</tspan><tspan x="315.47" textLength="10.77" lengthAdjust="spacingAndGlyphs">c</tspan><tspan x="327.68" textLength="12.50" lengthAdjust="spacingAndGlyphs">u</tspan><tspan x="340.92" textLength="19.36" lengthAdjust="spacingAndGlyphs">m</tspan><tspan x="360.57" textLength="12.51" lengthAdjust="spacingAndGlyphs">e</tspan><tspan x="373.77" textLength="12.50" lengthAdjust="spacingAndGlyphs">n</tspan><tspan x="386.79" textLength="7.15" lengthAdjust="spacingAndGlyphs">t</tspan><tspan x="394.38" textLength="11.24" lengthAdjust="spacingAndGlyphs">a</tspan><tspan x="407.79" textLength="7.15" lengthAdjust="spacingAndGlyphs">t</tspan><tspan x="415.83" textLength="4.84" lengthAdjust="spacingAndGlyphs">i</tspan><tspan x="421.55" textLength="12.39" lengthAdjust="spacingAndGlyphs">o</tspan><tspan x="434.77" textLength="12.50" lengthAdjust="spacingAndGlyphs">n</tspan></text>
<text y="794.35" font-family="Liberation Sans" font-size="22" fill="#354c7b"><tspan x="12.57" textLength="17.87" lengthAdjust="spacingAndGlyphs">M</tspan><tspan x="30.69" textLength="12.51" lengthAdjust="spacingAndGlyphs">e</tspan><tspan x="44.04" textLength="19.36" lengthAdjust="spacingAndGlyphs">m</tspan><tspan x="63.95" textLength="12.57" lengthAdjust="spacingAndGlyphs">b</tspan><tspan x="76.69" textLength="12.51" lengthAdjust="spacingAndGlyphs">e</tspan><tspan x="89.92" textLength="8.34" lengthAdjust="spacingAndGlyphs">r</tspan> <tspan x="105.47" textLength="12.03" lengthAdjust="spacingAndGlyphs">F</tspan><tspan x="117.80" textLength="12.50" lengthAdjust="spacingAndGlyphs">u</tspan><tspan x="130.89" textLength="12.50" lengthAdjust="spacingAndGlyphs">n</tspan><tspan x="143.58" textLength="10.77" lengthAdjust="spacingAndGlyphs">c</tspan><tspan x="155.91" textLength="7.15" lengthAdjust="spacingAndGlyphs">t</tspan><tspan x="163.95" textLength="4.84" lengthAdjust="spacingAndGlyphs">i</tspan><tspan x="169.67" textLength="12.39" lengthAdjust="spacingAndGlyphs">o</tspan><tspan x="182.89" textLength="12.50" lengthAdjust="spacingAndGlyphs">n</tspan> <tspan x="202.64" textLength="15.83" lengthAdjust="spacingAndGlyphs">D</tspan><tspan x="218.67" textLength="12.39" lengthAdjust="spacingAndGlyphs">o</tspan><tspan x="231.58" textLength="10.77" lengthAdjust="spacingAndGlyphs">c</tspan><tspan x="243.80" textLength="12.50" lengthAdjust="spacingAndGlyphs">u</tspan><tspan x="257.04" textLength="19.36" lengthAdjust="spacingAndGlyphs">m</tspan><tspan x="276.69" textLength="12.51" lengthAdjust="spacingAndGlyphs">e</tspan><tspan x="289.89" textLength="12.50" lengthAdjust="spacingAndGlyphs">n</tspan><tspan x="302.91" textLength="7.15" lengthAdjust="spacingAndGlyphs">t</tspan><tspan x="310.50" textLength="11.24" lengthAdjust="spacingAndGlyphs">a</tspan><tspan x="323.91" textLength="7.15" lengthAdjust="spacingAndGlyphs">t</tspan><tspan x="331.95" textLength="4.84" lengthAdjust="spacingAndGlyphs">i</tspan><tspan x="337.67" textLength="12.39" lengthAdjust="spacingAndGlyphs">o</tspan><tspan x="350.89" textLength="12.50" lengthAdjust="spacingAndGlyphs">n</tspan></text>
<text y="165.85" font-family="Liberation Sans" font-size="15.0" fill="#000000"><tspan x="13.19" textLength="9.26" lengthAdjust="spacingAndGlyphs">T</tspan><tspan x="22.78" textLength="8.41" lengthAdjust="spacingAndGlyphs">h</tspan><tspan x="31.87" textLength="3.24" lengthAdjust="spacingAndGlyphs">i</tspan><tspan x="35.77" textLength="7.03" lengthAdjust="spacingAndGlyphs">s</tspan> <tspan x="46.62" textLength="7.21" lengthAdjust="spacingAndGlyphs">c</tspan><tspan x="54.87" textLength="3.24" lengthAdjust="spacingAndGlyphs">l</tspan><tspan x="58.56" textLength="7.54" lengthAdjust="spacingAndGlyphs">a</tspan><tspan x="67.77" textLength="7.03" lengthAdjust="spacingAndGlyphs">s</tspan><tspan x="74.77" textLength="7.03" lengthAdjust="spacingAndGlyphs">s</tspan> <tspan x="85.76" textLength="8.37" lengthAdjust="spacingAndGlyphs">u</tspan><tspan x="94.77" textLength="7.03" lengthAdjust="spacingAndGlyphs">s</tspan><tspan x="101.68" textLength="8.38" lengthAdjust="spacingAndGlyphs">e</tspan><tspan x="110.77" textLength="7.03" lengthAdjust="spacingAndGlyphs">s</tspan> <tspan x="121.85" textLength="4.79" lengthAdjust="spacingAndGlyphs">t</tspan><tspan x="126.78" textLength="8.41" lengthAdjust="spacingAndGlyphs">h</tspan><tspan x="135.68" textLength="8.38" lengthAdjust="spacingAndGlyphs">e</tspan> <tspan x="148.54" textLength="8.06" lengthAdjust="spacingAndGlyphs">F</tspan><tspan x="156.54" textLength="8.06" lengthAdjust="spacingAndGlyphs">F</tspan><tspan x="164.91" textLength="12.97" lengthAdjust="spacingAndGlyphs">m</tspan><tspan x="178.86" textLength="8.42" lengthAdjust="spacingAndGlyphs">p</tspan><tspan x="187.68" textLength="8.38" lengthAdjust="spacingAndGlyphs">e</tspan><tspan x="196.70" textLength="8.41" lengthAdjust="spacingAndGlyphs">g</tspan> <tspan x="209.87" textLength="3.24" lengthAdjust="spacingAndGlyphs">l</tspan><tspan x="213.87" textLength="3.24" lengthAdjust="spacingAndGlyphs">i</tspan><tspan x="217.86" textLength="8.42" lengthAdjust="spacingAndGlyphs">b</tspan><tspan x="226.85" textLength="5.58" lengthAdjust="spacingAndGlyphs">r</tspan><tspan x="232.56" textLength="7.54" lengthAdjust="spacingAndGlyphs">a</tspan><tspan x="241.85" textLength="5.58" lengthAdjust="spacingAndGlyphs">r</tspan><tspan x="247.87" textLength="3.24" lengthAdjust="spacingAndGlyphs">i</tspan><tspan x="251.68" textLength="8.38" lengthAdjust="spacingAndGlyphs">e</tspan><tspan x="260.77" textLength="7.03" lengthAdjust="spacingAndGlyphs">s</tspan><tspan x="267.09" textLength="5.07" lengthAdjust="spacingAndGlyphs">,</tspan> <tspan x="275.85" textLength="4.79" lengthAdjust="spacingAndGlyphs">t</tspan><tspan x="280.68" textLength="8.30" lengthAdjust="spacingAndGlyphs">o</tspan> <tspan x="293.68" textLength="8.30" lengthAdjust="spacingAndGlyphs">o</tspan><tspan x="302.86" textLength="8.42" lengthAdjust="spacingAndGlyphs">p</tspan><tspan x="311.68" textLength="8.38" lengthAdjust="spacingAndGlyphs">e</tspan><tspan x="320.82" textLength="8.37" lengthAdjust="spacingAndGlyphs">n</tspan> <tspan x="333.92" textLength="7.53" lengthAdjust="spacingAndGlyphs">v</tspan><tspan x="341.87" textLength="3.24" lengthAdjust="spacingAndGlyphs">i</tspan><tspan x="345.70" textLength="8.41" lengthAdjust="spacingAndGlyphs">d</tspan><tspan x="354.68" textLength="8.38" lengthAdjust="spacingAndGlyphs">e</tspan><tspan x="363.68" textLength="8.30" lengthAdjust="spacingAndGlyphs">o</tspan> <tspan x="376.80" textLength="4.73" lengthAdjust="spacingAndGlyphs">f</tspan><tspan x="381.87" textLength="3.24" lengthAdjust="spacingAndGlyphs">i</tspan><tspan x="385.87" textLength="3.24" lengthAdjust="spacingAndGlyphs">l</tspan><tspan x="389.68" textLength="8.38" lengthAdjust="spacingAndGlyphs">e</tspan><tspan x="398.77" textLength="7.03" lengthAdjust="spacingAndGlyphs">s</tspan> <tspan x="409.56" textLength="7.54" lengthAdjust="spacingAndGlyphs">a</tspan><tspan x="418.82" textLength="8.37" lengthAdjust="spacingAndGlyphs">n</tspan><tspan x="427.70" textLength="8.41" lengthAdjust="spacingAndGlyphs">d</tspan> <tspan x="440.56" textLength="7.54" lengthAdjust="spacingAndGlyphs">a</tspan><tspan x="449.76" textLength="8.37" lengthAdjust="spacingAndGlyphs">u</tspan><tspan x="458.70" textLength="8.41" lengthAdjust="spacingAndGlyphs">d</tspan><tspan x="467.87" textLength="3.24" lengthAdjust="spacingAndGlyphs">i</tspan><tspan x="471.68" textLength="8.30" lengthAdjust="spacingAndGlyphs">o</tspan> <tspan x="484.80" textLength="4.73" lengthAdjust="spacingAndGlyphs">f</tspan><tspan x="489.87" textLength="3.24" lengthAdjust="spacingAndGlyphs">i</tspan><tspan x="493.87" textLength="3.24" lengthAdjust="spacingAndGlyphs">l</tspan><tspan x="497.68" textLength="8.38" lengthAdjust="spacingAndGlyphs">e</tspan><tspan x="506.77" textLength="7.03" lengthAdjust="spacingAndGlyphs">s</tspan><tspan x="513.09" textLength="5.07" lengthAdjust="spacingAndGlyphs">,</tspan> <tspan x="521.56" textLength="7.54" lengthAdjust="spacingAndGlyphs">a</tspan><tspan x="530.82" textLength="8.37" lengthAdjust="spacingAndGlyphs">n</tspan><tspan x="539.70" textLength="8.41" lengthAdjust="spacingAndGlyphs">d</tspan> <tspan x="552.85" textLength="5.58" lengthAdjust="spacingAndGlyphs">r</tspan><tspan x="558.68" textLength="8.38" lengthAdjust="spacingAndGlyphs">e</tspan><tspan x="567.85" textLength="4.79" lengthAdjust="spacingAndGlyphs">t</tspan><tspan x="572.76" textLength="8.37" lengthAdjust="spacingAndGlyphs">u</tspan><tspan x="581.85" textLength="5.58" lengthAdjust="spacingAndGlyphs">r</tspan><tspan x="587.82" textLength="8.37" lengthAdjust="spacingAndGlyphs">n</tspan></text>
<text y="165.85" font-family="Liberation Sans" font-size="15.0" font-weight="bold" fill="#3d578c"><tspan x="600.49" textLength="9.71" lengthAdjust="spacingAndGlyphs">o</tspan><tspan x="610.67" textLength="9.90" lengthAdjust="spacingAndGlyphs">p</tspan><tspan x="620.59" textLength="9.25" lengthAdjust="spacingAndGlyphs">e</tspan><tspan x="630.65" textLength="9.76" lengthAdjust="spacingAndGlyphs">n</tspan><tspan x="640.58" textLength="8.40" lengthAdjust="spacingAndGlyphs">s</tspan><tspan x="648.60" textLength="9.81" lengthAdjust="spacingAndGlyphs">h</tspan><tspan x="658.49" textLength="9.71" lengthAdjust="spacingAndGlyphs">o</tspan><tspan x="668.75" textLength="6.14" lengthAdjust="spacingAndGlyphs">t</tspan><tspan x="675.52" textLength="5.64" lengthAdjust="spacingAndGlyphs">:</tspan><tspan x="681.52" textLength="5.64" lengthAdjust="spacingAndGlyphs">:</tspan><tspan x="687.63" textLength="9.05" lengthAdjust="spacingAndGlyphs">F</tspan><tspan x="697.71" textLength="6.81" lengthAdjust="spacingAndGlyphs">r</tspan><tspan x="704.54" textLength="8.42" lengthAdjust="spacingAndGlyphs">a</tspan><tspan x="713.66" textLength="14.34" lengthAdjust="spacingAndGlyphs">m</tspan><tspan x="728.59" textLength="9.25" lengthAdjust="spacingAndGlyphs">e</tspan></text>
<text y="165.85" font-family="Liberation Sans" font-size="15.0" fill="#000000"><tspan x="742.68" textLength="8.30" lengthAdjust="spacingAndGlyphs">o</tspan><tspan x="751.86" textLength="8.42" lengthAdjust="spacingAndGlyphs">b</tspan><tspan x="760.69" textLength="3.44" lengthAdjust="spacingAndGlyphs">j</tspan><tspan x="764.68" textLength="8.38" lengthAdjust="spacingAndGlyphs">e</tspan><tspan x="773.62" textLength="7.21" lengthAdjust="spacingAndGlyphs">c</tspan><tspan x="781.85" textLength="4.79" lengthAdjust="spacingAndGlyphs">t</tspan><tspan x="786.77" textLength="7.03" lengthAdjust="spacingAndGlyphs">s</tspan> <tspan x="797.80" textLength="4.73" lengthAdjust="spacingAndGlyphs">f</tspan><tspan x="802.68" textLength="8.30" lengthAdjust="spacingAndGlyphs">o</tspan><tspan x="811.85" textLength="5.58" lengthAdjust="spacingAndGlyphs">r</tspan> <tspan x="821.56" textLength="7.54" lengthAdjust="spacingAndGlyphs">a</tspan><tspan x="830.82" textLength="8.37" lengthAdjust="spacingAndGlyphs">n</tspan><tspan x="839.92" textLength="7.51" lengthAdjust="spacingAndGlyphs">y</tspan> <tspan x="851.80" textLength="4.73" lengthAdjust="spacingAndGlyphs">f</tspan><tspan x="856.85" textLength="5.58" lengthAdjust="spacingAndGlyphs">r</tspan><tspan x="862.56" textLength="7.54" lengthAdjust="spacingAndGlyphs">a</tspan><tspan x="871.91" textLength="12.97" lengthAdjust="spacingAndGlyphs">m</tspan><tspan x="885.68" textLength="8.38" lengthAdjust="spacingAndGlyphs">e</tspan></text>
<text y="184.85" font-family="Liberation Sans" font-size="15.0" fill="#000000"><tspan x="12.51" textLength="3.24" lengthAdjust="spacingAndGlyphs">i</tspan><tspan x="16.46" textLength="8.37" lengthAdjust="spacingAndGlyphs">n</tspan> <tspan x="29.49" textLength="4.79" lengthAdjust="spacingAndGlyphs">t</tspan><tspan x="34.42" textLength="8.41" lengthAdjust="spacingAndGlyphs">h</tspan><tspan x="43.32" textLength="8.38" lengthAdjust="spacingAndGlyphs">e</tspan> <tspan x="56.44" textLength="4.73" lengthAdjust="spacingAndGlyphs">f</tspan><tspan x="61.51" textLength="3.24" lengthAdjust="spacingAndGlyphs">i</tspan><tspan x="65.50" textLength="3.24" lengthAdjust="spacingAndGlyphs">l</tspan><tspan x="69.32" textLength="8.38" lengthAdjust="spacingAndGlyphs">e</tspan><tspan x="78.30" textLength="4.19" lengthAdjust="spacingAndGlyphs">.</tspan></text>
<text y="217.95" font-family="Liberation Sans" font-size="15.0" fill="#000000"><tspan x="13.35" textLength="9.65" lengthAdjust="spacingAndGlyphs">A</tspan><tspan x="23.71" textLength="3.24" lengthAdjust="spacingAndGlyphs">l</tspan><tspan x="27.71" textLength="3.24" lengthAdjust="spacingAndGlyphs">l</tspan> <tspan x="35.62" textLength="7.03" lengthAdjust="spacingAndGlyphs">s</tspan><tspan x="42.53" textLength="8.38" lengthAdjust="spacingAndGlyphs">e</tspan><tspan x="51.53" textLength="8.38" lengthAdjust="spacingAndGlyphs">e</tspan><tspan x="60.68" textLength="7.70" lengthAdjust="spacingAndGlyphs">k</tspan><tspan x="68.72" textLength="3.24" lengthAdjust="spacingAndGlyphs">i</tspan><tspan x="72.67" textLength="8.37" lengthAdjust="spacingAndGlyphs">n</tspan><tspan x="81.55" textLength="8.41" lengthAdjust="spacingAndGlyphs">g</tspan> <tspan x="94.41" textLength="7.54" lengthAdjust="spacingAndGlyphs">a</tspan><tspan x="103.67" textLength="8.37" lengthAdjust="spacingAndGlyphs">n</tspan><tspan x="112.55" textLength="8.41" lengthAdjust="spacingAndGlyphs">d</tspan> <tspan x="125.47" textLength="7.21" lengthAdjust="spacingAndGlyphs">c</tspan><tspan x="133.41" textLength="7.54" lengthAdjust="spacingAndGlyphs">a</tspan><tspan x="142.47" textLength="7.21" lengthAdjust="spacingAndGlyphs">c</tspan><tspan x="150.63" textLength="8.41" lengthAdjust="spacingAndGlyphs">h</tspan><tspan x="159.72" textLength="3.24" lengthAdjust="spacingAndGlyphs">i</tspan><tspan x="163.67" textLength="8.37" lengthAdjust="spacingAndGlyphs">n</tspan><tspan x="172.55" textLength="8.41" lengthAdjust="spacingAndGlyphs">g</tspan> <tspan x="185.72" textLength="3.24" lengthAdjust="spacingAndGlyphs">i</tspan><tspan x="189.62" textLength="7.03" lengthAdjust="spacingAndGlyphs">s</tspan> <tspan x="200.63" textLength="8.41" lengthAdjust="spacingAndGlyphs">h</tspan><tspan x="209.41" textLength="7.54" lengthAdjust="spacingAndGlyphs">a</tspan><tspan x="218.67" textLength="8.37" lengthAdjust="spacingAndGlyphs">n</tspan><tspan x="227.55" textLength="8.41" lengthAdjust="spacingAndGlyphs">d</tspan><tspan x="236.71" textLength="3.24" lengthAdjust="spacingAndGlyphs">l</tspan><tspan x="240.53" textLength="8.38" lengthAdjust="spacingAndGlyphs">e</tspan><tspan x="249.55" textLength="8.41" lengthAdjust="spacingAndGlyphs">d</tspan> <tspan x="262.72" textLength="3.24" lengthAdjust="spacingAndGlyphs">i</tspan><tspan x="266.67" textLength="8.37" lengthAdjust="spacingAndGlyphs">n</tspan><tspan x="275.70" textLength="4.79" lengthAdjust="spacingAndGlyphs">t</tspan><tspan x="280.53" textLength="8.38" lengthAdjust="spacingAndGlyphs">e</tspan><tspan x="289.70" textLength="5.58" lengthAdjust="spacingAndGlyphs">r</tspan><tspan x="295.67" textLength="8.37" lengthAdjust="spacingAndGlyphs">n</tspan><tspan x="304.41" textLength="7.54" lengthAdjust="spacingAndGlyphs">a</tspan><tspan x="313.71" textLength="3.24" lengthAdjust="spacingAndGlyphs">l</tspan><tspan x="317.71" textLength="3.24" lengthAdjust="spacingAndGlyphs">l</tspan><tspan x="321.77" textLength="7.51" lengthAdjust="spacingAndGlyphs">y</tspan><tspan x="328.94" textLength="5.07" lengthAdjust="spacingAndGlyphs">,</tspan> <tspan x="337.41" textLength="7.54" lengthAdjust="spacingAndGlyphs">a</tspan><tspan x="346.67" textLength="8.37" lengthAdjust="spacingAndGlyphs">n</tspan><tspan x="355.55" textLength="8.41" lengthAdjust="spacingAndGlyphs">d</tspan> <tspan x="368.70" textLength="4.79" lengthAdjust="spacingAndGlyphs">t</tspan><tspan x="373.63" textLength="8.41" lengthAdjust="spacingAndGlyphs">h</tspan><tspan x="382.53" textLength="8.38" lengthAdjust="spacingAndGlyphs">e</tspan> <tspan x="395.71" textLength="8.42" lengthAdjust="spacingAndGlyphs">p</tspan><tspan x="404.70" textLength="5.58" lengthAdjust="spacingAndGlyphs">r</tspan><tspan x="410.72" textLength="3.24" lengthAdjust="spacingAndGlyphs">i</tspan><tspan x="414.76" textLength="12.97" lengthAdjust="spacingAndGlyphs">m</tspan><tspan x="428.41" textLength="7.54" lengthAdjust="spacingAndGlyphs">a</tspan><tspan x="437.70" textLength="5.58" lengthAdjust="spacingAndGlyphs">r</tspan><tspan x="443.77" textLength="7.51" lengthAdjust="spacingAndGlyphs">y</tspan> <tspan x="455.71" textLength="8.42" lengthAdjust="spacingAndGlyphs">p</tspan><tspan x="464.61" textLength="8.37" lengthAdjust="spacingAndGlyphs">u</tspan><tspan x="473.71" textLength="8.42" lengthAdjust="spacingAndGlyphs">b</tspan><tspan x="482.71" textLength="3.24" lengthAdjust="spacingAndGlyphs">l</tspan><tspan x="486.72" textLength="3.24" lengthAdjust="spacingAndGlyphs">i</tspan><tspan x="490.47" textLength="7.21" lengthAdjust="spacingAndGlyphs">c</tspan> <tspan x="502.72" textLength="3.24" lengthAdjust="spacingAndGlyphs">i</tspan><tspan x="506.67" textLength="8.37" lengthAdjust="spacingAndGlyphs">n</tspan><tspan x="515.70" textLength="4.79" lengthAdjust="spacingAndGlyphs">t</tspan><tspan x="520.53" textLength="8.38" lengthAdjust="spacingAndGlyphs">e</tspan><tspan x="529.70" textLength="5.58" lengthAdjust="spacingAndGlyphs">r</tspan><tspan x="535.65" textLength="4.73" lengthAdjust="spacingAndGlyphs">f</tspan><tspan x="540.41" textLength="7.54" lengthAdjust="spacingAndGlyphs">a</tspan><tspan x="549.47" textLength="7.21" lengthAdjust="spacingAndGlyphs">c</tspan><tspan x="557.53" textLength="8.38" lengthAdjust="spacingAndGlyphs">e</tspan> <tspan x="570.72" textLength="3.24" lengthAdjust="spacingAndGlyphs">i</tspan><tspan x="574.62" textLength="7.03" lengthAdjust="spacingAndGlyphs">s</tspan> <tspan x="585.70" textLength="4.79" lengthAdjust="spacingAndGlyphs">t</tspan><tspan x="590.63" textLength="8.41" lengthAdjust="spacingAndGlyphs">h</tspan><tspan x="599.53" textLength="8.38" lengthAdjust="spacingAndGlyphs">e</tspan></text>
<text y="217.95" font-family="Liberation Sans" font-size="15.0" font-weight="bold" fill="#3d578c"><tspan x="612.25" textLength="11.74" lengthAdjust="spacingAndGlyphs">G</tspan><tspan x="623.44" textLength="9.25" lengthAdjust="spacingAndGlyphs">e</tspan><tspan x="633.60" textLength="6.14" lengthAdjust="spacingAndGlyphs">t</tspan><tspan x="640.48" textLength="9.05" lengthAdjust="spacingAndGlyphs">F</tspan><tspan x="650.56" textLength="6.81" lengthAdjust="spacingAndGlyphs">r</tspan><tspan x="657.39" textLength="8.42" lengthAdjust="spacingAndGlyphs">a</tspan><tspan x="666.51" textLength="14.34" lengthAdjust="spacingAndGlyphs">m</tspan><tspan x="681.44" textLength="9.25" lengthAdjust="spacingAndGlyphs">e</tspan><tspan x="691.75" textLength="5.02" lengthAdjust="spacingAndGlyphs">(</tspan><tspan x="698.41" textLength="5.02" lengthAdjust="spacingAndGlyphs">)</tspan></text>
<text y="217.95" font-family="Liberation Sans" font-size="15.0" fill="#000000"><tspan x="707.76" textLength="12.97" lengthAdjust="spacingAndGlyphs">m</tspan><tspan x="721.53" textLength="8.38" lengthAdjust="spacingAndGlyphs">e</tspan><tspan x="730.70" textLength="4.79" lengthAdjust="spacingAndGlyphs">t</tspan><tspan x="735.63" textLength="8.41" lengthAdjust="spacingAndGlyphs">h</tspan><tspan x="744.53" textLength="8.30" lengthAdjust="spacingAndGlyphs">o</tspan><tspan x="753.55" textLength="8.41" lengthAdjust="spacingAndGlyphs">d</tspan><tspan x="762.51" textLength="4.19" lengthAdjust="spacingAndGlyphs">.</tspan> <tspan x="770.04" textLength="9.26" lengthAdjust="spacingAndGlyphs">T</tspan><tspan x="779.53" textLength="8.30" lengthAdjust="spacingAndGlyphs">o</tspan> <tspan x="792.61" textLength="8.37" lengthAdjust="spacingAndGlyphs">u</tspan><tspan x="801.62" textLength="7.03" lengthAdjust="spacingAndGlyphs">s</tspan><tspan x="808.53" textLength="8.38" lengthAdjust="spacingAndGlyphs">e</tspan> <tspan x="821.70" textLength="4.79" lengthAdjust="spacingAndGlyphs">t</tspan><tspan x="826.63" textLength="8.41" lengthAdjust="spacingAndGlyphs">h</tspan><tspan x="835.72" textLength="3.24" lengthAdjust="spacingAndGlyphs">i</tspan><tspan x="839.62" textLength="7.03" lengthAdjust="spacingAndGlyphs">s</tspan> <tspan x="850.70" textLength="5.58" lengthAdjust="spacingAndGlyphs">r</tspan><tspan x="856.53" textLength="8.38" lengthAdjust="spacingAndGlyphs">e</tspan><tspan x="865.41" textLength="7.54" lengthAdjust="spacingAndGlyphs">a</tspan><tspan x="874.55" textLength="8.41" lengthAdjust="spacingAndGlyphs">d</tspan><tspan x="883.53" textLength="8.38" lengthAdjust="spacingAndGlyphs">e</tspan><tspan x="892.70" textLength="5.58" lengthAdjust="spacingAndGlyphs">r</tspan><tspan x="897.94" textLength="5.07" lengthAdjust="spacingAndGlyphs">,</tspan></text>
<text y="236.85" font-family="Liberation Sans" font-size="15.0" fill="#000000"><tspan x="12.97" textLength="7.03" lengthAdjust="spacingAndGlyphs">s</tspan><tspan x="20.07" textLength="3.24" lengthAdjust="spacingAndGlyphs">i</tspan><tspan x="24.11" textLength="12.97" lengthAdjust="spacingAndGlyphs">m</tspan><tspan x="38.06" textLength="8.42" lengthAdjust="spacingAndGlyphs">p</tspan><tspan x="47.07" textLength="3.24" lengthAdjust="spacingAndGlyphs">l</tspan><tspan x="51.12" textLength="7.51" lengthAdjust="spacingAndGlyphs">y</tspan> <tspan x="62.82" textLength="7.21" lengthAdjust="spacingAndGlyphs">c</tspan><tspan x="71.05" textLength="5.58" lengthAdjust="spacingAndGlyphs">r</tspan><tspan x="76.88" textLength="8.38" lengthAdjust="spacingAndGlyphs">e</tspan><tspan x="85.76" textLength="7.54" lengthAdjust="spacingAndGlyphs">a</tspan><tspan x="95.05" textLength="4.79" lengthAdjust="spacingAndGlyphs">t</tspan><tspan x="99.88" textLength="8.38" lengthAdjust="spacingAndGlyphs">e</tspan> <tspan x="112.76" textLength="7.54" lengthAdjust="spacingAndGlyphs">a</tspan><tspan x="122.02" textLength="8.37" lengthAdjust="spacingAndGlyphs">n</tspan> <tspan x="135.07" textLength="3.24" lengthAdjust="spacingAndGlyphs">i</tspan><tspan x="139.02" textLength="8.37" lengthAdjust="spacingAndGlyphs">n</tspan><tspan x="147.97" textLength="7.03" lengthAdjust="spacingAndGlyphs">s</tspan><tspan x="155.05" textLength="4.79" lengthAdjust="spacingAndGlyphs">t</tspan><tspan x="159.76" textLength="7.54" lengthAdjust="spacingAndGlyphs">a</tspan><tspan x="169.02" textLength="8.37" lengthAdjust="spacingAndGlyphs">n</tspan><tspan x="177.82" textLength="7.21" lengthAdjust="spacingAndGlyphs">c</tspan><tspan x="185.88" textLength="8.38" lengthAdjust="spacingAndGlyphs">e</tspan> <tspan x="198.88" textLength="8.30" lengthAdjust="spacingAndGlyphs">o</tspan><tspan x="208.00" textLength="4.73" lengthAdjust="spacingAndGlyphs">f</tspan> <tspan x="217.05" textLength="4.79" lengthAdjust="spacingAndGlyphs">t</tspan><tspan x="221.98" textLength="8.41" lengthAdjust="spacingAndGlyphs">h</tspan><tspan x="231.07" textLength="3.24" lengthAdjust="spacingAndGlyphs">i</tspan><tspan x="234.97" textLength="7.03" lengthAdjust="spacingAndGlyphs">s</tspan> <tspan x="245.82" textLength="7.21" lengthAdjust="spacingAndGlyphs">c</tspan><tspan x="254.07" textLength="3.24" lengthAdjust="spacingAndGlyphs">l</tspan><tspan x="257.76" textLength="7.54" lengthAdjust="spacingAndGlyphs">a</tspan><tspan x="266.97" textLength="7.03" lengthAdjust="spacingAndGlyphs">s</tspan><tspan x="273.97" textLength="7.03" lengthAdjust="spacingAndGlyphs">s</tspan><tspan x="280.29" textLength="5.07" lengthAdjust="spacingAndGlyphs">,</tspan> <tspan x="288.76" textLength="7.54" lengthAdjust="spacingAndGlyphs">a</tspan><tspan x="298.02" textLength="8.37" lengthAdjust="spacingAndGlyphs">n</tspan><tspan x="306.90" textLength="8.41" lengthAdjust="spacingAndGlyphs">d</tspan> <tspan x="319.82" textLength="7.21" lengthAdjust="spacingAndGlyphs">c</tspan><tspan x="327.76" textLength="7.54" lengthAdjust="spacingAndGlyphs">a</tspan><tspan x="337.07" textLength="3.24" lengthAdjust="spacingAndGlyphs">l</tspan><tspan x="341.07" textLength="3.24" lengthAdjust="spacingAndGlyphs">l</tspan> <tspan x="349.05" textLength="4.79" lengthAdjust="spacingAndGlyphs">t</tspan><tspan x="353.98" textLength="8.41" lengthAdjust="spacingAndGlyphs">h</tspan><tspan x="362.88" textLength="8.38" lengthAdjust="spacingAndGlyphs">e</tspan> <tspan x="375.64" textLength="11.04" lengthAdjust="spacingAndGlyphs">G</tspan><tspan x="386.88" textLength="8.38" lengthAdjust="spacingAndGlyphs">e</tspan><tspan x="396.05" textLength="4.79" lengthAdjust="spacingAndGlyphs">t</tspan><tspan x="400.74" textLength="8.06" lengthAdjust="spacingAndGlyphs">F</tspan><tspan x="409.05" textLength="5.58" lengthAdjust="spacingAndGlyphs">r</tspan><tspan x="414.76" textLength="7.54" lengthAdjust="spacingAndGlyphs">a</tspan><tspan x="424.11" textLength="12.97" lengthAdjust="spacingAndGlyphs">m</tspan><tspan x="437.88" textLength="8.38" lengthAdjust="spacingAndGlyphs">e</tspan> <tspan x="451.11" textLength="12.97" lengthAdjust="spacingAndGlyphs">m</tspan><tspan x="464.88" textLength="8.38" lengthAdjust="spacingAndGlyphs">e</tspan><tspan x="474.05" textLength="4.79" lengthAdjust="spacingAndGlyphs">t</tspan><tspan x="478.98" textLength="8.41" lengthAdjust="spacingAndGlyphs">h</tspan><tspan x="487.88" textLength="8.30" lengthAdjust="spacingAndGlyphs">o</tspan><tspan x="496.90" textLength="8.41" lengthAdjust="spacingAndGlyphs">d</tspan> <tspan x="510.05" textLength="4.79" lengthAdjust="spacingAndGlyphs">t</tspan><tspan x="514.88" textLength="8.30" lengthAdjust="spacingAndGlyphs">o</tspan> <tspan x="527.97" textLength="7.03" lengthAdjust="spacingAndGlyphs">s</tspan><tspan x="535.05" textLength="4.79" lengthAdjust="spacingAndGlyphs">t</tspan><tspan x="539.76" textLength="7.54" lengthAdjust="spacingAndGlyphs">a</tspan><tspan x="549.05" textLength="5.58" lengthAdjust="spacingAndGlyphs">r</tspan><tspan x="555.05" textLength="4.79" lengthAdjust="spacingAndGlyphs">t</tspan> <tspan x="564.05" textLength="5.58" lengthAdjust="spacingAndGlyphs">r</tspan><tspan x="569.88" textLength="8.38" lengthAdjust="spacingAndGlyphs">e</tspan><tspan x="579.05" textLength="4.79" lengthAdjust="spacingAndGlyphs">t</tspan><tspan x="584.05" textLength="5.58" lengthAdjust="spacingAndGlyphs">r</tspan><tspan x="590.07" textLength="3.24" lengthAdjust="spacingAndGlyphs">i</tspan><tspan x="593.88" textLength="8.38" lengthAdjust="spacingAndGlyphs">e</tspan><tspan x="603.12" textLength="7.53" lengthAdjust="spacingAndGlyphs">v</tspan><tspan x="611.07" textLength="3.24" lengthAdjust="spacingAndGlyphs">i</tspan><tspan x="615.02" textLength="8.37" lengthAdjust="spacingAndGlyphs">n</tspan><tspan x="623.90" textLength="8.41" lengthAdjust="spacingAndGlyphs">g</tspan> <tspan x="637.00" textLength="4.73" lengthAdjust="spacingAndGlyphs">f</tspan><tspan x="642.05" textLength="5.58" lengthAdjust="spacingAndGlyphs">r</tspan><tspan x="647.76" textLength="7.54" lengthAdjust="spacingAndGlyphs">a</tspan><tspan x="657.11" textLength="12.97" lengthAdjust="spacingAndGlyphs">m</tspan><tspan x="670.88" textLength="8.38" lengthAdjust="spacingAndGlyphs">e</tspan><tspan x="679.97" textLength="7.03" lengthAdjust="spacingAndGlyphs">s</tspan><tspan x="686.86" textLength="4.19" lengthAdjust="spacingAndGlyphs">.</tspan> <tspan x="694.72" textLength="10.29" lengthAdjust="spacingAndGlyphs">U</tspan><tspan x="704.97" textLength="7.03" lengthAdjust="spacingAndGlyphs">s</tspan><tspan x="711.88" textLength="8.38" lengthAdjust="spacingAndGlyphs">e</tspan> <tspan x="725.05" textLength="4.79" lengthAdjust="spacingAndGlyphs">t</tspan><tspan x="729.98" textLength="8.41" lengthAdjust="spacingAndGlyphs">h</tspan><tspan x="738.88" textLength="8.38" lengthAdjust="spacingAndGlyphs">e</tspan></text>
<text y="236.85" font-family="Liberation Sans" font-size="15.0" font-weight="bold" fill="#000000"><tspan x="751.77" textLength="4.76" lengthAdjust="spacingAndGlyphs">i</tspan><tspan x="756.85" textLength="9.76" lengthAdjust="spacingAndGlyphs">n</tspan><tspan x="766.88" textLength="5.88" lengthAdjust="spacingAndGlyphs">f</tspan><tspan x="772.69" textLength="9.71" lengthAdjust="spacingAndGlyphs">o</tspan></text>
<text y="236.85" font-family="Liberation Sans" font-size="15.0" fill="#000000"><tspan x="786.97" textLength="7.03" lengthAdjust="spacingAndGlyphs">s</tspan><tspan x="794.05" textLength="4.79" lengthAdjust="spacingAndGlyphs">t</tspan><tspan x="799.05" textLength="5.58" lengthAdjust="spacingAndGlyphs">r</tspan><tspan x="804.96" textLength="8.37" lengthAdjust="spacingAndGlyphs">u</tspan><tspan x="813.82" textLength="7.21" lengthAdjust="spacingAndGlyphs">c</tspan><tspan x="822.05" textLength="4.79" lengthAdjust="spacingAndGlyphs">t</tspan> <tspan x="831.05" textLength="4.79" lengthAdjust="spacingAndGlyphs">t</tspan><tspan x="835.88" textLength="8.30" lengthAdjust="spacingAndGlyphs">o</tspan> <tspan x="848.88" textLength="8.30" lengthAdjust="spacingAndGlyphs">o</tspan><tspan x="858.06" textLength="8.42" lengthAdjust="spacingAndGlyphs">b</tspan><tspan x="867.05" textLength="4.79" lengthAdjust="spacingAndGlyphs">t</tspan><tspan x="871.76" textLength="7.54" lengthAdjust="spacingAndGlyphs">a</tspan><tspan x="881.07" textLength="3.24" lengthAdjust="spacingAndGlyphs">i</tspan><tspan x="885.02" textLength="8.37" lengthAdjust="spacingAndGlyphs">n</tspan></text>
<text y="255.85" font-family="Liberation Sans" font-size="15.0" fill="#000000"><tspan x="12.51" textLength="3.24" lengthAdjust="spacingAndGlyphs">i</tspan><tspan x="16.46" textLength="8.37" lengthAdjust="spacingAndGlyphs">n</tspan><tspan x="25.44" textLength="4.73" lengthAdjust="spacingAndGlyphs">f</tspan><tspan x="30.32" textLength="8.30" lengthAdjust="spacingAndGlyphs">o</tspan><tspan x="39.49" textLength="5.58" lengthAdjust="spacingAndGlyphs">r</tspan><tspan x="45.55" textLength="12.97" lengthAdjust="spacingAndGlyphs">m</tspan><tspan x="59.20" textLength="7.54" lengthAdjust="spacingAndGlyphs">a</tspan><tspan x="68.49" textLength="4.79" lengthAdjust="spacingAndGlyphs">t</tspan><tspan x="73.51" textLength="3.24" lengthAdjust="spacingAndGlyphs">i</tspan><tspan x="77.32" textLength="8.30" lengthAdjust="spacingAndGlyphs">o</tspan><tspan x="86.46" textLength="8.37" lengthAdjust="spacingAndGlyphs">n</tspan> <tspan x="99.32" textLength="8.30" lengthAdjust="spacingAndGlyphs">o</tspan><tspan x="108.46" textLength="8.37" lengthAdjust="spacingAndGlyphs">n</tspan> <tspan x="121.49" textLength="4.79" lengthAdjust="spacingAndGlyphs">t</tspan><tspan x="126.42" textLength="8.41" lengthAdjust="spacingAndGlyphs">h</tspan><tspan x="135.32" textLength="8.38" lengthAdjust="spacingAndGlyphs">e</tspan> <tspan x="148.44" textLength="4.73" lengthAdjust="spacingAndGlyphs">f</tspan><tspan x="153.51" textLength="3.24" lengthAdjust="spacingAndGlyphs">i</tspan><tspan x="157.50" textLength="3.24" lengthAdjust="spacingAndGlyphs">l</tspan><tspan x="161.32" textLength="8.38" lengthAdjust="spacingAndGlyphs">e</tspan><tspan x="169.73" textLength="5.07" lengthAdjust="spacingAndGlyphs">,</tspan> <tspan x="178.41" textLength="7.03" lengthAdjust="spacingAndGlyphs">s</tspan><tspan x="185.40" textLength="8.37" lengthAdjust="spacingAndGlyphs">u</tspan><tspan x="194.26" textLength="7.21" lengthAdjust="spacingAndGlyphs">c</tspan><tspan x="202.42" textLength="8.41" lengthAdjust="spacingAndGlyphs">h</tspan> <tspan x="215.20" textLength="7.54" lengthAdjust="spacingAndGlyphs">a</tspan><tspan x="224.41" textLength="7.03" lengthAdjust="spacingAndGlyphs">s</tspan> <tspan x="235.49" textLength="4.79" lengthAdjust="spacingAndGlyphs">t</tspan><tspan x="240.42" textLength="8.41" lengthAdjust="spacingAndGlyphs">h</tspan><tspan x="249.32" textLength="8.38" lengthAdjust="spacingAndGlyphs">e</tspan> <tspan x="262.50" textLength="3.24" lengthAdjust="spacingAndGlyphs">l</tspan><tspan x="266.32" textLength="8.38" lengthAdjust="spacingAndGlyphs">e</tspan><tspan x="275.46" textLength="8.37" lengthAdjust="spacingAndGlyphs">n</tspan><tspan x="284.34" textLength="8.41" lengthAdjust="spacingAndGlyphs">g</tspan><tspan x="293.49" textLength="4.79" lengthAdjust="spacingAndGlyphs">t</tspan><tspan x="298.42" textLength="8.41" lengthAdjust="spacingAndGlyphs">h</tspan> <tspan x="311.40" textLength="4.36" lengthAdjust="spacingAndGlyphs">(</tspan><tspan x="317.46" textLength="9.18" lengthAdjust="spacingAndGlyphs">#</tspan> <tspan x="332.32" textLength="8.30" lengthAdjust="spacingAndGlyphs">o</tspan><tspan x="341.44" textLength="4.73" lengthAdjust="spacingAndGlyphs">f</tspan> <tspan x="350.44" textLength="4.73" lengthAdjust="spacingAndGlyphs">f</tspan><tspan x="355.49" textLength="5.58" lengthAdjust="spacingAndGlyphs">r</tspan><tspan x="361.20" textLength="7.54" lengthAdjust="spacingAndGlyphs">a</tspan><tspan x="370.55" textLength="12.97" lengthAdjust="spacingAndGlyphs">m</tspan><tspan x="384.32" textLength="8.38" lengthAdjust="spacingAndGlyphs">e</tspan><tspan x="393.41" textLength="7.03" lengthAdjust="spacingAndGlyphs">s</tspan><tspan x="401.06" textLength="4.36" lengthAdjust="spacingAndGlyphs">)</tspan><tspan x="404.73" textLength="5.07" lengthAdjust="spacingAndGlyphs">,</tspan> <tspan x="413.42" textLength="8.41" lengthAdjust="spacingAndGlyphs">h</tspan><tspan x="422.32" textLength="8.38" lengthAdjust="spacingAndGlyphs">e</tspan><tspan x="431.51" textLength="3.24" lengthAdjust="spacingAndGlyphs">i</tspan><tspan x="435.34" textLength="8.41" lengthAdjust="spacingAndGlyphs">g</tspan><tspan x="444.42" textLength="8.41" lengthAdjust="spacingAndGlyphs">h</tspan><tspan x="453.49" textLength="4.79" lengthAdjust="spacingAndGlyphs">t</tspan><tspan x="457.73" textLength="5.07" lengthAdjust="spacingAndGlyphs">,</tspan> <tspan x="466.67" textLength="10.46" lengthAdjust="spacingAndGlyphs">w</tspan><tspan x="477.51" textLength="3.24" lengthAdjust="spacingAndGlyphs">i</tspan><tspan x="481.34" textLength="8.41" lengthAdjust="spacingAndGlyphs">d</tspan><tspan x="490.49" textLength="4.79" lengthAdjust="spacingAndGlyphs">t</tspan><tspan x="495.42" textLength="8.41" lengthAdjust="spacingAndGlyphs">h</tspan><tspan x="503.73" textLength="5.07" lengthAdjust="spacingAndGlyphs">,</tspan> <tspan x="512.50" textLength="8.42" lengthAdjust="spacingAndGlyphs">b</tspan><tspan x="521.51" textLength="3.24" lengthAdjust="spacingAndGlyphs">i</tspan><tspan x="525.49" textLength="4.79" lengthAdjust="spacingAndGlyphs">t</tspan> <tspan x="534.49" textLength="5.58" lengthAdjust="spacingAndGlyphs">r</tspan><tspan x="540.20" textLength="7.54" lengthAdjust="spacingAndGlyphs">a</tspan><tspan x="549.49" textLength="4.79" lengthAdjust="spacingAndGlyphs">t</tspan><tspan x="554.32" textLength="8.38" lengthAdjust="spacingAndGlyphs">e</tspan><tspan x="562.73" textLength="5.07" lengthAdjust="spacingAndGlyphs">,</tspan> <tspan x="571.44" textLength="4.73" lengthAdjust="spacingAndGlyphs">f</tspan><tspan x="576.49" textLength="5.58" lengthAdjust="spacingAndGlyphs">r</tspan><tspan x="582.20" textLength="7.54" lengthAdjust="spacingAndGlyphs">a</tspan><tspan x="591.55" textLength="12.97" lengthAdjust="spacingAndGlyphs">m</tspan><tspan x="605.32" textLength="8.38" lengthAdjust="spacingAndGlyphs">e</tspan><tspan x="614.41" textLength="7.03" lengthAdjust="spacingAndGlyphs">s</tspan> <tspan x="625.50" textLength="8.42" lengthAdjust="spacingAndGlyphs">p</tspan><tspan x="634.32" textLength="8.38" lengthAdjust="spacingAndGlyphs">e</tspan><tspan x="643.49" textLength="5.58" lengthAdjust="spacingAndGlyphs">r</tspan> <tspan x="653.41" textLength="7.03" lengthAdjust="spacingAndGlyphs">s</tspan><tspan x="660.32" textLength="8.38" lengthAdjust="spacingAndGlyphs">e</tspan><tspan x="669.26" textLength="7.21" lengthAdjust="spacingAndGlyphs">c</tspan><tspan x="677.32" textLength="8.30" lengthAdjust="spacingAndGlyphs">o</tspan><tspan x="686.46" textLength="8.37" lengthAdjust="spacingAndGlyphs">n</tspan><tspan x="695.34" textLength="8.41" lengthAdjust="spacingAndGlyphs">d</tspan> <tspan x="708.40" textLength="4.36" lengthAdjust="spacingAndGlyphs">(</tspan><tspan x="713.44" textLength="4.73" lengthAdjust="spacingAndGlyphs">f</tspan><tspan x="718.50" textLength="8.42" lengthAdjust="spacingAndGlyphs">p</tspan><tspan x="727.41" textLength="7.03" lengthAdjust="spacingAndGlyphs">s</tspan><tspan x="735.06" textLength="4.36" lengthAdjust="spacingAndGlyphs">)</tspan><tspan x="738.73" textLength="5.07" lengthAdjust="spacingAndGlyphs">,</tspan> <tspan x="747.32" textLength="8.38" lengthAdjust="spacingAndGlyphs">e</tspan><tspan x="756.49" textLength="4.79" lengthAdjust="spacingAndGlyphs">t</tspan><tspan x="761.26" textLength="7.21" lengthAdjust="spacingAndGlyphs">c</tspan><tspan x="769.30" textLength="4.19" lengthAdjust="spacingAndGlyphs">.</tspan><tspan x="773.30" textLength="4.19" lengthAdjust="spacingAndGlyphs">.</tspan><tspan x="777.30" textLength="4.19" lengthAdjust="spacingAndGlyphs">.</tspan></text>
<text y="494.85" font-family="Liberation Sans" font-size="15.0" fill="#000000"><tspan x="12.23" textLength="10.61" lengthAdjust="spacingAndGlyphs">D</tspan><tspan x="23.27" textLength="8.38" lengthAdjust="spacingAndGlyphs">e</tspan><tspan x="32.39" textLength="4.73" lengthAdjust="spacingAndGlyphs">f</tspan><tspan x="37.46" textLength="3.24" lengthAdjust="spacingAndGlyphs">i</tspan><tspan x="41.41" textLength="8.37" lengthAdjust="spacingAndGlyphs">n</tspan><tspan x="50.46" textLength="3.24" lengthAdjust="spacingAndGlyphs">i</tspan><tspan x="54.43" textLength="4.79" lengthAdjust="spacingAndGlyphs">t</tspan><tspan x="59.46" textLength="3.24" lengthAdjust="spacingAndGlyphs">i</tspan><tspan x="63.26" textLength="8.30" lengthAdjust="spacingAndGlyphs">o</tspan><tspan x="72.41" textLength="8.37" lengthAdjust="spacingAndGlyphs">n</tspan> <tspan x="85.14" textLength="7.54" lengthAdjust="spacingAndGlyphs">a</tspan><tspan x="94.43" textLength="4.79" lengthAdjust="spacingAndGlyphs">t</tspan> <tspan x="103.45" textLength="3.24" lengthAdjust="spacingAndGlyphs">l</tspan><tspan x="107.46" textLength="3.24" lengthAdjust="spacingAndGlyphs">i</tspan><tspan x="111.41" textLength="8.37" lengthAdjust="spacingAndGlyphs">n</tspan><tspan x="120.27" textLength="8.38" lengthAdjust="spacingAndGlyphs">e</tspan></text>
<text y="494.85" font-family="Liberation Sans" font-size="15.0" font-weight="bold" fill="#3d578c"><tspan x="133.35" textLength="9.17" lengthAdjust="spacingAndGlyphs">9</tspan><tspan x="143.49" textLength="8.85" lengthAdjust="spacingAndGlyphs">4</tspan></text>
<text y="494.85" font-family="Liberation Sans" font-size="15.0" fill="#000000"><tspan x="157.26" textLength="8.30" lengthAdjust="spacingAndGlyphs">o</tspan><tspan x="166.39" textLength="4.73" lengthAdjust="spacingAndGlyphs">f</tspan> <tspan x="175.39" textLength="4.73" lengthAdjust="spacingAndGlyphs">f</tspan><tspan x="180.46" textLength="3.24" lengthAdjust="spacingAndGlyphs">i</tspan><tspan x="184.45" textLength="3.24" lengthAdjust="spacingAndGlyphs">l</tspan><tspan x="188.27" textLength="8.38" lengthAdjust="spacingAndGlyphs">e</tspan></text>
<text y="494.85" font-family="Liberation Sans" font-size="15.0" font-weight="bold" fill="#3d578c"><tspan x="201.21" textLength="9.05" lengthAdjust="spacingAndGlyphs">F</tspan><tspan x="211.21" textLength="9.05" lengthAdjust="spacingAndGlyphs">F</tspan><tspan x="221.24" textLength="14.34" lengthAdjust="spacingAndGlyphs">m</tspan><tspan x="236.26" textLength="9.90" lengthAdjust="spacingAndGlyphs">p</tspan><tspan x="246.17" textLength="9.25" lengthAdjust="spacingAndGlyphs">e</tspan><tspan x="256.12" textLength="9.91" lengthAdjust="spacingAndGlyphs">g</tspan><tspan x="266.20" textLength="10.93" lengthAdjust="spacingAndGlyphs">R</tspan><tspan x="277.17" textLength="9.25" lengthAdjust="spacingAndGlyphs">e</tspan><tspan x="287.12" textLength="8.42" lengthAdjust="spacingAndGlyphs">a</tspan><tspan x="296.12" textLength="9.90" lengthAdjust="spacingAndGlyphs">d</tspan><tspan x="306.17" textLength="9.25" lengthAdjust="spacingAndGlyphs">e</tspan><tspan x="316.30" textLength="6.81" lengthAdjust="spacingAndGlyphs">r</tspan><tspan x="323.45" textLength="4.69" lengthAdjust="spacingAndGlyphs">.</tspan><tspan x="328.18" textLength="9.81" lengthAdjust="spacingAndGlyphs">h</tspan></text>
<text y="494.85" font-family="Liberation Sans" font-size="15.0" fill="#000000"><tspan x="338.25" textLength="4.19" lengthAdjust="spacingAndGlyphs">.</tspan></text>
<text y="658.15" font-family="Liberation Sans" font-size="15.0" fill="#000000"><tspan x="23.65" textLength="9.96" lengthAdjust="spacingAndGlyphs">C</tspan><tspan x="33.95" textLength="8.30" lengthAdjust="spacingAndGlyphs">o</tspan><tspan x="43.09" textLength="8.37" lengthAdjust="spacingAndGlyphs">n</tspan><tspan x="52.04" textLength="7.03" lengthAdjust="spacingAndGlyphs">s</tspan><tspan x="59.12" textLength="4.79" lengthAdjust="spacingAndGlyphs">t</tspan><tspan x="64.12" textLength="5.58" lengthAdjust="spacingAndGlyphs">r</tspan><tspan x="70.03" textLength="8.37" lengthAdjust="spacingAndGlyphs">u</tspan><tspan x="78.89" textLength="7.21" lengthAdjust="spacingAndGlyphs">c</tspan><tspan x="87.12" textLength="4.79" lengthAdjust="spacingAndGlyphs">t</tspan><tspan x="91.95" textLength="8.30" lengthAdjust="spacingAndGlyphs">o</tspan><tspan x="101.12" textLength="5.58" lengthAdjust="spacingAndGlyphs">r</tspan> <tspan x="111.07" textLength="4.73" lengthAdjust="spacingAndGlyphs">f</tspan><tspan x="115.95" textLength="8.30" lengthAdjust="spacingAndGlyphs">o</tspan><tspan x="125.12" textLength="5.58" lengthAdjust="spacingAndGlyphs">r</tspan></text>
<text y="658.15" font-family="Liberation Sans" font-size="15.0" font-weight="bold" fill="#3d578c"><tspan x="134.90" textLength="9.05" lengthAdjust="spacingAndGlyphs">F</tspan><tspan x="144.90" textLength="9.05" lengthAdjust="spacingAndGlyphs">F</tspan><tspan x="154.93" textLength="14.34" lengthAdjust="spacingAndGlyphs">m</tspan><tspan x="169.95" textLength="9.90" lengthAdjust="spacingAndGlyphs">p</tspan><tspan x="179.86" textLength="9.25" lengthAdjust="spacingAndGlyphs">e</tspan><tspan x="189.81" textLength="9.91" lengthAdjust="spacingAndGlyphs">g</tspan><tspan x="199.89" textLength="10.93" lengthAdjust="spacingAndGlyphs">R</tspan><tspan x="210.86" textLength="9.25" lengthAdjust="spacingAndGlyphs">e</tspan><tspan x="220.81" textLength="8.42" lengthAdjust="spacingAndGlyphs">a</tspan><tspan x="229.80" textLength="9.90" lengthAdjust="spacingAndGlyphs">d</tspan><tspan x="239.86" textLength="9.25" lengthAdjust="spacingAndGlyphs">e</tspan><tspan x="249.98" textLength="6.81" lengthAdjust="spacingAndGlyphs">r</tspan></text>
<text y="658.15" font-family="Liberation Sans" font-size="15.0" fill="#000000"><tspan x="256.94" textLength="4.19" lengthAdjust="spacingAndGlyphs">.</tspan> <tspan x="264.46" textLength="9.26" lengthAdjust="spacingAndGlyphs">T</tspan><tspan x="274.05" textLength="8.41" lengthAdjust="spacingAndGlyphs">h</tspan><tspan x="283.15" textLength="3.24" lengthAdjust="spacingAndGlyphs">i</tspan><tspan x="287.04" textLength="7.03" lengthAdjust="spacingAndGlyphs">s</tspan> <tspan x="297.83" textLength="7.54" lengthAdjust="spacingAndGlyphs">a</tspan><tspan x="307.03" textLength="8.37" lengthAdjust="spacingAndGlyphs">u</tspan><tspan x="316.12" textLength="4.79" lengthAdjust="spacingAndGlyphs">t</tspan><tspan x="320.95" textLength="8.30" lengthAdjust="spacingAndGlyphs">o</tspan><tspan x="330.18" textLength="12.97" lengthAdjust="spacingAndGlyphs">m</tspan><tspan x="343.83" textLength="7.54" lengthAdjust="spacingAndGlyphs">a</tspan><tspan x="353.12" textLength="4.79" lengthAdjust="spacingAndGlyphs">t</tspan><tspan x="358.15" textLength="3.24" lengthAdjust="spacingAndGlyphs">i</tspan><tspan x="361.89" textLength="7.21" lengthAdjust="spacingAndGlyphs">c</tspan><tspan x="369.83" textLength="7.54" lengthAdjust="spacingAndGlyphs">a</tspan><tspan x="379.14" textLength="3.24" lengthAdjust="spacingAndGlyphs">l</tspan><tspan x="383.14" textLength="3.24" lengthAdjust="spacingAndGlyphs">l</tspan><tspan x="387.20" textLength="7.51" lengthAdjust="spacingAndGlyphs">y</tspan> <tspan x="398.95" textLength="8.30" lengthAdjust="spacingAndGlyphs">o</tspan><tspan x="408.13" textLength="8.42" lengthAdjust="spacingAndGlyphs">p</tspan><tspan x="416.96" textLength="8.38" lengthAdjust="spacingAndGlyphs">e</tspan><tspan x="426.09" textLength="8.37" lengthAdjust="spacingAndGlyphs">n</tspan><tspan x="435.04" textLength="7.03" lengthAdjust="spacingAndGlyphs">s</tspan> <tspan x="446.12" textLength="4.79" lengthAdjust="spacingAndGlyphs">t</tspan><tspan x="451.05" textLength="8.41" lengthAdjust="spacingAndGlyphs">h</tspan><tspan x="459.96" textLength="8.38" lengthAdjust="spacingAndGlyphs">e</tspan> <tspan x="473.18" textLength="12.97" lengthAdjust="spacingAndGlyphs">m</tspan><tspan x="486.96" textLength="8.38" lengthAdjust="spacingAndGlyphs">e</tspan><tspan x="495.97" textLength="8.41" lengthAdjust="spacingAndGlyphs">d</tspan><tspan x="505.15" textLength="3.24" lengthAdjust="spacingAndGlyphs">i</tspan><tspan x="508.83" textLength="7.54" lengthAdjust="spacingAndGlyphs">a</tspan> <tspan x="522.07" textLength="4.73" lengthAdjust="spacingAndGlyphs">f</tspan><tspan x="527.15" textLength="3.24" lengthAdjust="spacingAndGlyphs">i</tspan><tspan x="531.14" textLength="3.24" lengthAdjust="spacingAndGlyphs">l</tspan><tspan x="534.96" textLength="8.38" lengthAdjust="spacingAndGlyphs">e</tspan> <tspan x="547.83" textLength="7.54" lengthAdjust="spacingAndGlyphs">a</tspan><tspan x="557.09" textLength="8.37" lengthAdjust="spacingAndGlyphs">n</tspan><tspan x="565.97" textLength="8.41" lengthAdjust="spacingAndGlyphs">d</tspan> <tspan x="579.14" textLength="3.24" lengthAdjust="spacingAndGlyphs">l</tspan><tspan x="582.95" textLength="8.30" lengthAdjust="spacingAndGlyphs">o</tspan><tspan x="591.83" textLength="7.54" lengthAdjust="spacingAndGlyphs">a</tspan><tspan x="600.97" textLength="8.41" lengthAdjust="spacingAndGlyphs">d</tspan><tspan x="610.04" textLength="7.03" lengthAdjust="spacingAndGlyphs">s</tspan> <tspan x="621.07" textLength="4.73" lengthAdjust="spacingAndGlyphs">f</tspan><tspan x="626.12" textLength="5.58" lengthAdjust="spacingAndGlyphs">r</tspan><tspan x="631.83" textLength="7.54" lengthAdjust="spacingAndGlyphs">a</tspan><tspan x="641.18" textLength="12.97" lengthAdjust="spacingAndGlyphs">m</tspan><tspan x="654.96" textLength="8.38" lengthAdjust="spacingAndGlyphs">e</tspan> <tspan x="668.17" textLength="8.04" lengthAdjust="spacingAndGlyphs">1</tspan><tspan x="676.36" textLength="5.07" lengthAdjust="spacingAndGlyphs">,</tspan> <tspan x="684.95" textLength="8.30" lengthAdjust="spacingAndGlyphs">o</tspan><tspan x="694.12" textLength="5.58" lengthAdjust="spacingAndGlyphs">r</tspan> <tspan x="704.15" textLength="3.24" lengthAdjust="spacingAndGlyphs">i</tspan><tspan x="708.12" textLength="4.79" lengthAdjust="spacingAndGlyphs">t</tspan> <tspan x="717.12" textLength="4.79" lengthAdjust="spacingAndGlyphs">t</tspan><tspan x="722.05" textLength="8.41" lengthAdjust="spacingAndGlyphs">h</tspan><tspan x="731.12" textLength="5.58" lengthAdjust="spacingAndGlyphs">r</tspan><tspan x="736.95" textLength="8.30" lengthAdjust="spacingAndGlyphs">o</tspan><tspan x="746.30" textLength="10.46" lengthAdjust="spacingAndGlyphs">w</tspan><tspan x="757.04" textLength="7.03" lengthAdjust="spacingAndGlyphs">s</tspan> <tspan x="767.95" textLength="8.30" lengthAdjust="spacingAndGlyphs">o</tspan><tspan x="777.09" textLength="8.37" lengthAdjust="spacingAndGlyphs">n</tspan><tspan x="785.96" textLength="8.38" lengthAdjust="spacingAndGlyphs">e</tspan> <tspan x="798.95" textLength="8.30" lengthAdjust="spacingAndGlyphs">o</tspan><tspan x="808.07" textLength="4.73" lengthAdjust="spacingAndGlyphs">f</tspan> <tspan x="817.12" textLength="4.79" lengthAdjust="spacingAndGlyphs">t</tspan><tspan x="822.05" textLength="8.41" lengthAdjust="spacingAndGlyphs">h</tspan><tspan x="830.96" textLength="8.38" lengthAdjust="spacingAndGlyphs">e</tspan></text>
<text y="677.15" font-family="Liberation Sans" font-size="15.0" fill="#000000"><tspan x="24.54" textLength="4.73" lengthAdjust="spacingAndGlyphs">f</tspan><tspan x="29.41" textLength="8.30" lengthAdjust="spacingAndGlyphs">o</tspan><tspan x="38.60" textLength="3.24" lengthAdjust="spacingAndGlyphs">l</tspan><tspan x="42.60" textLength="3.24" lengthAdjust="spacingAndGlyphs">l</tspan><tspan x="46.41" textLength="8.30" lengthAdjust="spacingAndGlyphs">o</tspan><tspan x="55.76" textLength="10.46" lengthAdjust="spacingAndGlyphs">w</tspan><tspan x="66.61" textLength="3.24" lengthAdjust="spacingAndGlyphs">i</tspan><tspan x="70.56" textLength="8.37" lengthAdjust="spacingAndGlyphs">n</tspan><tspan x="79.44" textLength="8.41" lengthAdjust="spacingAndGlyphs">g</tspan> <tspan x="92.42" textLength="8.38" lengthAdjust="spacingAndGlyphs">e</tspan><tspan x="101.56" textLength="7.66" lengthAdjust="spacingAndGlyphs">x</tspan><tspan x="109.36" textLength="7.21" lengthAdjust="spacingAndGlyphs">c</tspan><tspan x="117.42" textLength="8.38" lengthAdjust="spacingAndGlyphs">e</tspan><tspan x="126.60" textLength="8.42" lengthAdjust="spacingAndGlyphs">p</tspan><tspan x="135.58" textLength="4.79" lengthAdjust="spacingAndGlyphs">t</tspan><tspan x="140.61" textLength="3.24" lengthAdjust="spacingAndGlyphs">i</tspan><tspan x="144.41" textLength="8.30" lengthAdjust="spacingAndGlyphs">o</tspan><tspan x="153.56" textLength="8.37" lengthAdjust="spacingAndGlyphs">n</tspan><tspan x="162.51" textLength="7.03" lengthAdjust="spacingAndGlyphs">s</tspan><tspan x="169.40" textLength="4.19" lengthAdjust="spacingAndGlyphs">.</tspan></text>
<text y="709.85" font-family="Liberation Sans" font-size="15.0" fill="#000000"><tspan x="23.33" textLength="10.61" lengthAdjust="spacingAndGlyphs">D</tspan><tspan x="34.37" textLength="8.38" lengthAdjust="spacingAndGlyphs">e</tspan><tspan x="43.49" textLength="4.73" lengthAdjust="spacingAndGlyphs">f</tspan><tspan x="48.56" textLength="3.24" lengthAdjust="spacingAndGlyphs">i</tspan><tspan x="52.51" textLength="8.37" lengthAdjust="spacingAndGlyphs">n</tspan><tspan x="61.56" textLength="3.24" lengthAdjust="spacingAndGlyphs">i</tspan><tspan x="65.53" textLength="4.79" lengthAdjust="spacingAndGlyphs">t</tspan><tspan x="70.56" textLength="3.24" lengthAdjust="spacingAndGlyphs">i</tspan><tspan x="74.36" textLength="8.30" lengthAdjust="spacingAndGlyphs">o</tspan><tspan x="83.51" textLength="8.37" lengthAdjust="spacingAndGlyphs">n</tspan> <tspan x="96.24" textLength="7.54" lengthAdjust="spacingAndGlyphs">a</tspan><tspan x="105.53" textLength="4.79" lengthAdjust="spacingAndGlyphs">t</tspan> <tspan x="114.55" textLength="3.24" lengthAdjust="spacingAndGlyphs">l</tspan><tspan x="118.56" textLength="3.24" lengthAdjust="spacingAndGlyphs">i</tspan><tspan x="122.51" textLength="8.37" lengthAdjust="spacingAndGlyphs">n</tspan><tspan x="131.37" textLength="8.38" lengthAdjust="spacingAndGlyphs">e</tspan></text>
<text y="709.85" font-family="Liberation Sans" font-size="15.0" font-weight="bold" fill="#3d578c"><tspan x="144.74" textLength="8.73" lengthAdjust="spacingAndGlyphs">3</tspan><tspan x="154.76" textLength="8.72" lengthAdjust="spacingAndGlyphs">5</tspan></text>
<text y="709.85" font-family="Liberation Sans" font-size="15.0" fill="#000000"><tspan x="168.36" textLength="8.30" lengthAdjust="spacingAndGlyphs">o</tspan><tspan x="177.49" textLength="4.73" lengthAdjust="spacingAndGlyphs">f</tspan> <tspan x="186.49" textLength="4.73" lengthAdjust="spacingAndGlyphs">f</tspan><tspan x="191.56" textLength="3.24" lengthAdjust="spacingAndGlyphs">i</tspan><tspan x="195.55" textLength="3.24" lengthAdjust="spacingAndGlyphs">l</tspan><tspan x="199.37" textLength="8.38" lengthAdjust="spacingAndGlyphs">e</tspan></text>
<text y="709.85" font-family="Liberation Sans" font-size="15.0" font-weight="bold" fill="#3d578c"><tspan x="212.31" textLength="9.05" lengthAdjust="spacingAndGlyphs">F</tspan><tspan x="222.31" textLength="9.05" lengthAdjust="spacingAndGlyphs">F</tspan><tspan x="232.34" textLength="14.34" lengthAdjust="spacingAndGlyphs">m</tspan><tspan x="247.36" textLength="9.90" lengthAdjust="spacingAndGlyphs">p</tspan><tspan x="257.27" textLength="9.25" lengthAdjust="spacingAndGlyphs">e</tspan><tspan x="267.22" textLength="9.91" lengthAdjust="spacingAndGlyphs">g</tspan><tspan x="277.30" textLength="10.93" lengthAdjust="spacingAndGlyphs">R</tspan><tspan x="288.27" textLength="9.25" lengthAdjust="spacingAndGlyphs">e</tspan><tspan x="298.22" textLength="8.42" lengthAdjust="spacingAndGlyphs">a</tspan><tspan x="307.22" textLength="9.90" lengthAdjust="spacingAndGlyphs">d</tspan><tspan x="317.27" textLength="9.25" lengthAdjust="spacingAndGlyphs">e</tspan><tspan x="327.40" textLength="6.81" lengthAdjust="spacingAndGlyphs">r</tspan><tspan x="334.55" textLength="4.69" lengthAdjust="spacingAndGlyphs">.</tspan><tspan x="339.04" textLength="8.20" lengthAdjust="spacingAndGlyphs">c</tspan><tspan x="347.36" textLength="9.90" lengthAdjust="spacingAndGlyphs">p</tspan><tspan x="357.36" textLength="9.90" lengthAdjust="spacingAndGlyphs">p</tspan></text>
<text y="709.85" font-family="Liberation Sans" font-size="15.0" fill="#000000"><tspan x="367.35" textLength="4.19" lengthAdjust="spacingAndGlyphs">.</tspan></text>
<text y="890.75" font-family="Liberation Sans" font-size="15.0" fill="#000000"><tspan x="23.65" textLength="9.96" lengthAdjust="spacingAndGlyphs">C</tspan><tspan x="34.14" textLength="3.24" lengthAdjust="spacingAndGlyphs">l</tspan><tspan x="37.95" textLength="8.30" lengthAdjust="spacingAndGlyphs">o</tspan><tspan x="47.04" textLength="7.03" lengthAdjust="spacingAndGlyphs">s</tspan><tspan x="53.96" textLength="8.38" lengthAdjust="spacingAndGlyphs">e</tspan> <tspan x="66.81" textLength="8.06" lengthAdjust="spacingAndGlyphs">F</tspan><tspan x="75.15" textLength="3.24" lengthAdjust="spacingAndGlyphs">i</tspan><tspan x="79.14" textLength="3.24" lengthAdjust="spacingAndGlyphs">l</tspan><tspan x="82.96" textLength="8.38" lengthAdjust="spacingAndGlyphs">e</tspan><tspan x="91.94" textLength="4.19" lengthAdjust="spacingAndGlyphs">.</tspan></text>
<text y="924.75" font-family="Liberation Sans" font-size="15.0" fill="#000000"><tspan x="23.22" textLength="4.14" lengthAdjust="spacingAndGlyphs">I</tspan><tspan x="27.60" textLength="12.97" lengthAdjust="spacingAndGlyphs">m</tspan><tspan x="41.54" textLength="8.42" lengthAdjust="spacingAndGlyphs">p</tspan><tspan x="50.55" textLength="3.24" lengthAdjust="spacingAndGlyphs">l</tspan><tspan x="54.37" textLength="8.38" lengthAdjust="spacingAndGlyphs">e</tspan><tspan x="63.60" textLength="12.97" lengthAdjust="spacingAndGlyphs">m</tspan><tspan x="77.37" textLength="8.38" lengthAdjust="spacingAndGlyphs">e</tspan><tspan x="86.51" textLength="8.37" lengthAdjust="spacingAndGlyphs">n</tspan><tspan x="95.53" textLength="4.79" lengthAdjust="spacingAndGlyphs">t</tspan><tspan x="100.46" textLength="7.03" lengthAdjust="spacingAndGlyphs">s</tspan></text>
<text y="924.75" font-family="Liberation Sans" font-size="15.0" font-weight="bold" fill="#3d578c"><tspan x="111.18" textLength="9.71" lengthAdjust="spacingAndGlyphs">o</tspan><tspan x="121.36" textLength="9.90" lengthAdjust="spacingAndGlyphs">p</tspan><tspan x="131.27" textLength="9.25" lengthAdjust="spacingAndGlyphs">e</tspan><tspan x="141.34" textLength="9.76" lengthAdjust="spacingAndGlyphs">n</tspan><tspan x="151.27" textLength="8.40" lengthAdjust="spacingAndGlyphs">s</tspan><tspan x="159.28" textLength="9.81" lengthAdjust="spacingAndGlyphs">h</tspan><tspan x="169.18" textLength="9.71" lengthAdjust="spacingAndGlyphs">o</tspan><tspan x="179.43" textLength="6.14" lengthAdjust="spacingAndGlyphs">t</tspan><tspan x="186.20" textLength="5.64" lengthAdjust="spacingAndGlyphs">:</tspan><tspan x="192.20" textLength="5.64" lengthAdjust="spacingAndGlyphs">:</tspan><tspan x="198.30" textLength="10.93" lengthAdjust="spacingAndGlyphs">R</tspan><tspan x="209.27" textLength="9.25" lengthAdjust="spacingAndGlyphs">e</tspan><tspan x="219.22" textLength="8.42" lengthAdjust="spacingAndGlyphs">a</tspan><tspan x="228.22" textLength="9.90" lengthAdjust="spacingAndGlyphs">d</tspan><tspan x="238.27" textLength="9.25" lengthAdjust="spacingAndGlyphs">e</tspan><tspan x="248.40" textLength="6.81" lengthAdjust="spacingAndGlyphs">r</tspan><tspan x="255.25" textLength="10.61" lengthAdjust="spacingAndGlyphs">B</tspan><tspan x="266.22" textLength="8.42" lengthAdjust="spacingAndGlyphs">a</tspan><tspan x="275.27" textLength="8.40" lengthAdjust="spacingAndGlyphs">s</tspan><tspan x="283.27" textLength="9.25" lengthAdjust="spacingAndGlyphs">e</tspan></text>
<text y="924.75" font-family="Liberation Sans" font-size="15.0" fill="#000000"><tspan x="293.35" textLength="4.19" lengthAdjust="spacingAndGlyphs">.</tspan></text>
<text y="609.85" font-family="Liberation Sans" font-size="15.0" font-weight="bold" fill="#253555"><tspan x="22.40" textLength="9.05" lengthAdjust="spacingAndGlyphs">F</tspan><tspan x="32.40" textLength="9.05" lengthAdjust="spacingAndGlyphs">F</tspan><tspan x="42.43" textLength="14.34" lengthAdjust="spacingAndGlyphs">m</tspan><tspan x="57.45" textLength="9.90" lengthAdjust="spacingAndGlyphs">p</tspan><tspan x="67.36" textLength="9.25" lengthAdjust="spacingAndGlyphs">e</tspan><tspan x="77.31" textLength="9.91" lengthAdjust="spacingAndGlyphs">g</tspan><tspan x="87.39" textLength="10.93" lengthAdjust="spacingAndGlyphs">R</tspan><tspan x="98.36" textLength="9.25" lengthAdjust="spacingAndGlyphs">e</tspan><tspan x="108.31" textLength="8.42" lengthAdjust="spacingAndGlyphs">a</tspan><tspan x="117.30" textLength="9.90" lengthAdjust="spacingAndGlyphs">d</tspan><tspan x="127.36" textLength="9.25" lengthAdjust="spacingAndGlyphs">e</tspan><tspan x="137.49" textLength="6.81" lengthAdjust="spacingAndGlyphs">r</tspan><tspan x="144.29" textLength="5.64" lengthAdjust="spacingAndGlyphs">:</tspan><tspan x="150.29" textLength="5.64" lengthAdjust="spacingAndGlyphs">:</tspan><tspan x="156.40" textLength="9.05" lengthAdjust="spacingAndGlyphs">F</tspan><tspan x="166.40" textLength="9.05" lengthAdjust="spacingAndGlyphs">F</tspan><tspan x="176.43" textLength="14.34" lengthAdjust="spacingAndGlyphs">m</tspan><tspan x="191.45" textLength="9.90" lengthAdjust="spacingAndGlyphs">p</tspan><tspan x="201.36" textLength="9.25" lengthAdjust="spacingAndGlyphs">e</tspan><tspan x="211.31" textLength="9.91" lengthAdjust="spacingAndGlyphs">g</tspan><tspan x="221.39" textLength="10.93" lengthAdjust="spacingAndGlyphs">R</tspan><tspan x="232.36" textLength="9.25" lengthAdjust="spacingAndGlyphs">e</tspan><tspan x="242.31" textLength="8.42" lengthAdjust="spacingAndGlyphs">a</tspan><tspan x="251.30" textLength="9.90" lengthAdjust="spacingAndGlyphs">d</tspan><tspan x="261.36" textLength="9.25" lengthAdjust="spacingAndGlyphs">e</tspan><tspan x="271.49" textLength="6.81" lengthAdjust="spacingAndGlyphs">r</tspan></text>
<text y="609.85" font-family="Liberation Sans" font-size="15.0" font-weight="bold" fill="#253555"><tspan x="282.06" textLength="5.02" lengthAdjust="spacingAndGlyphs">(</tspan> <tspan x="292.74" textLength="8.40" lengthAdjust="spacingAndGlyphs">s</tspan><tspan x="300.90" textLength="6.14" lengthAdjust="spacingAndGlyphs">t</tspan><tspan x="307.87" textLength="6.81" lengthAdjust="spacingAndGlyphs">r</tspan><tspan x="314.73" textLength="4.76" lengthAdjust="spacingAndGlyphs">i</tspan><tspan x="319.81" textLength="9.76" lengthAdjust="spacingAndGlyphs">n</tspan><tspan x="329.69" textLength="9.91" lengthAdjust="spacingAndGlyphs">g</tspan></text>
<text y="609.85" font-family="Liberation Sans" font-size="15.0" font-weight="bold" fill="#602020"><tspan x="348.76" textLength="9.90" lengthAdjust="spacingAndGlyphs">p</tspan><tspan x="358.62" textLength="8.42" lengthAdjust="spacingAndGlyphs">a</tspan><tspan x="367.83" textLength="6.14" lengthAdjust="spacingAndGlyphs">t</tspan><tspan x="374.68" textLength="9.81" lengthAdjust="spacingAndGlyphs">h</tspan></text>
<text y="609.85" font-family="Liberation Sans" font-size="15.0" font-weight="bold" fill="#253555"><tspan x="390.39" textLength="5.02" lengthAdjust="spacingAndGlyphs">)</tspan> <tspan x="400.58" textLength="6.14" lengthAdjust="spacingAndGlyphs">t</tspan><tspan x="407.44" textLength="9.81" lengthAdjust="spacingAndGlyphs">h</tspan><tspan x="417.55" textLength="6.81" lengthAdjust="spacingAndGlyphs">r</tspan><tspan x="424.33" textLength="9.71" lengthAdjust="spacingAndGlyphs">o</tspan><tspan x="434.80" textLength="12.12" lengthAdjust="spacingAndGlyphs">w</tspan></text>
<text y="609.85" font-family="Liberation Sans" font-size="15.0" font-weight="bold" fill="#253555"><tspan x="451.46" textLength="5.02" lengthAdjust="spacingAndGlyphs">(</tspan></text>
<text y="609.85" font-family="Liberation Sans" font-size="15.0" font-weight="bold" fill="#3d578c"><tspan x="457.28" textLength="4.83" lengthAdjust="spacingAndGlyphs">I</tspan><tspan x="462.21" textLength="9.76" lengthAdjust="spacingAndGlyphs">n</tspan><tspan x="472.23" textLength="8.88" lengthAdjust="spacingAndGlyphs">v</tspan><tspan x="481.09" textLength="8.42" lengthAdjust="spacingAndGlyphs">a</tspan><tspan x="490.13" textLength="4.76" lengthAdjust="spacingAndGlyphs">l</tspan><tspan x="495.13" textLength="4.76" lengthAdjust="spacingAndGlyphs">i</tspan><tspan x="500.09" textLength="9.90" lengthAdjust="spacingAndGlyphs">d</tspan><tspan x="510.18" textLength="9.05" lengthAdjust="spacingAndGlyphs">F</tspan><tspan x="520.13" textLength="4.76" lengthAdjust="spacingAndGlyphs">i</tspan><tspan x="525.13" textLength="4.76" lengthAdjust="spacingAndGlyphs">l</tspan><tspan x="530.14" textLength="9.25" lengthAdjust="spacingAndGlyphs">e</tspan></text>
<text y="609.85" font-family="Liberation Sans" font-size="15.0" font-weight="bold" fill="#253555"><tspan x="539.70" textLength="5.42" lengthAdjust="spacingAndGlyphs">,</tspan></text>
<text y="609.85" font-family="Liberation Sans" font-size="15.0" font-weight="bold" fill="#3d578c"><tspan x="550.27" textLength="11.38" lengthAdjust="spacingAndGlyphs">N</tspan><tspan x="562.05" textLength="9.71" lengthAdjust="spacingAndGlyphs">o</tspan><tspan x="572.37" textLength="9.66" lengthAdjust="spacingAndGlyphs">S</tspan><tspan x="582.30" textLength="6.14" lengthAdjust="spacingAndGlyphs">t</tspan><tspan x="589.27" textLength="6.81" lengthAdjust="spacingAndGlyphs">r</tspan><tspan x="596.14" textLength="9.25" lengthAdjust="spacingAndGlyphs">e</tspan><tspan x="606.09" textLength="8.42" lengthAdjust="spacingAndGlyphs">a</tspan><tspan x="615.22" textLength="14.34" lengthAdjust="spacingAndGlyphs">m</tspan><tspan x="630.14" textLength="8.40" lengthAdjust="spacingAndGlyphs">s</tspan><tspan x="638.18" textLength="9.05" lengthAdjust="spacingAndGlyphs">F</tspan><tspan x="648.05" textLength="9.71" lengthAdjust="spacingAndGlyphs">o</tspan><tspan x="658.19" textLength="9.76" lengthAdjust="spacingAndGlyphs">u</tspan><tspan x="668.21" textLength="9.76" lengthAdjust="spacingAndGlyphs">n</tspan><tspan x="678.09" textLength="9.90" lengthAdjust="spacingAndGlyphs">d</tspan></text>
<text y="609.85" font-family="Liberation Sans" font-size="15.0" font-weight="bold" fill="#253555"><tspan x="687.70" textLength="5.42" lengthAdjust="spacingAndGlyphs">,</tspan></text>
<text y="609.85" font-family="Liberation Sans" font-size="15.0" font-weight="bold" fill="#3d578c"><tspan x="698.28" textLength="4.83" lengthAdjust="spacingAndGlyphs">I</tspan><tspan x="703.21" textLength="9.76" lengthAdjust="spacingAndGlyphs">n</tspan><tspan x="713.23" textLength="8.88" lengthAdjust="spacingAndGlyphs">v</tspan><tspan x="722.09" textLength="8.42" lengthAdjust="spacingAndGlyphs">a</tspan><tspan x="731.13" textLength="4.76" lengthAdjust="spacingAndGlyphs">l</tspan><tspan x="736.13" textLength="4.76" lengthAdjust="spacingAndGlyphs">i</tspan><tspan x="741.09" textLength="9.90" lengthAdjust="spacingAndGlyphs">d</tspan><tspan x="750.84" textLength="10.39" lengthAdjust="spacingAndGlyphs">C</tspan><tspan x="761.05" textLength="9.71" lengthAdjust="spacingAndGlyphs">o</tspan><tspan x="771.09" textLength="9.90" lengthAdjust="spacingAndGlyphs">d</tspan><tspan x="781.14" textLength="9.25" lengthAdjust="spacingAndGlyphs">e</tspan><tspan x="790.91" textLength="8.20" lengthAdjust="spacingAndGlyphs">c</tspan></text>
<text y="609.85" font-family="Liberation Sans" font-size="15.0" font-weight="bold" fill="#253555"><tspan x="800.11" textLength="5.02" lengthAdjust="spacingAndGlyphs">)</tspan></text>
<text y="842.65" font-family="Liberation Sans" font-size="15.0" font-weight="bold" fill="#253555"><tspan x="23.52" textLength="8.88" lengthAdjust="spacingAndGlyphs">v</tspan><tspan x="32.34" textLength="9.71" lengthAdjust="spacingAndGlyphs">o</tspan><tspan x="42.42" textLength="4.76" lengthAdjust="spacingAndGlyphs">i</tspan><tspan x="47.38" textLength="9.90" lengthAdjust="spacingAndGlyphs">d</tspan> <tspan x="62.47" textLength="9.05" lengthAdjust="spacingAndGlyphs">F</tspan><tspan x="72.47" textLength="9.05" lengthAdjust="spacingAndGlyphs">F</tspan><tspan x="82.51" textLength="14.34" lengthAdjust="spacingAndGlyphs">m</tspan><tspan x="97.52" textLength="9.90" lengthAdjust="spacingAndGlyphs">p</tspan><tspan x="107.43" textLength="9.25" lengthAdjust="spacingAndGlyphs">e</tspan><tspan x="117.38" textLength="9.91" lengthAdjust="spacingAndGlyphs">g</tspan><tspan x="127.47" textLength="10.93" lengthAdjust="spacingAndGlyphs">R</tspan><tspan x="138.43" textLength="9.25" lengthAdjust="spacingAndGlyphs">e</tspan><tspan x="148.38" textLength="8.42" lengthAdjust="spacingAndGlyphs">a</tspan><tspan x="157.38" textLength="9.90" lengthAdjust="spacingAndGlyphs">d</tspan><tspan x="167.43" textLength="9.25" lengthAdjust="spacingAndGlyphs">e</tspan><tspan x="177.56" textLength="6.81" lengthAdjust="spacingAndGlyphs">r</tspan><tspan x="184.37" textLength="5.64" lengthAdjust="spacingAndGlyphs">:</tspan><tspan x="190.37" textLength="5.64" lengthAdjust="spacingAndGlyphs">:</tspan><tspan x="196.13" textLength="10.39" lengthAdjust="spacingAndGlyphs">C</tspan><tspan x="206.42" textLength="4.76" lengthAdjust="spacingAndGlyphs">l</tspan><tspan x="211.34" textLength="9.71" lengthAdjust="spacingAndGlyphs">o</tspan><tspan x="221.43" textLength="8.40" lengthAdjust="spacingAndGlyphs">s</tspan><tspan x="229.43" textLength="9.25" lengthAdjust="spacingAndGlyphs">e</tspan></text>
<text y="842.65" font-family="Liberation Sans" font-size="15.0" font-weight="bold" fill="#253555"><tspan x="243.26" textLength="5.02" lengthAdjust="spacingAndGlyphs">(</tspan></text>
<text y="842.65" font-family="Liberation Sans" font-size="15.0" font-weight="bold" fill="#253555"><tspan x="258.19" textLength="5.02" lengthAdjust="spacingAndGlyphs">)</tspan></text>
<text y="844.15" font-family="Liberation Sans" font-size="9.6" fill="#ffffff"><tspan x="866.15" textLength="5.06" lengthAdjust="spacingAndGlyphs">v</tspan><tspan x="871.14" textLength="2.18" lengthAdjust="spacingAndGlyphs">i</tspan><tspan x="874.11" textLength="3.74" lengthAdjust="spacingAndGlyphs">r</tspan><tspan x="878.11" textLength="3.21" lengthAdjust="spacingAndGlyphs">t</tspan><tspan x="882.05" textLength="5.62" lengthAdjust="spacingAndGlyphs">u</tspan><tspan x="887.91" textLength="5.06" lengthAdjust="spacingAndGlyphs">a</tspan><tspan x="894.13" textLength="2.18" lengthAdjust="spacingAndGlyphs">l</tspan></text>
<text y="290.75" font-family="Liberation Mono" font-size="13.0" fill="#800000"><tspan x="21.91" textLength="7.70" lengthAdjust="spacingAndGlyphs">/</tspan><tspan x="29.91" textLength="7.70" lengthAdjust="spacingAndGlyphs">/</tspan> <tspan x="46.08" textLength="7.37" lengthAdjust="spacingAndGlyphs">C</tspan><tspan x="54.76" textLength="7.74" lengthAdjust="spacingAndGlyphs">r</tspan><tspan x="61.96" textLength="7.94" lengthAdjust="spacingAndGlyphs">e</tspan><tspan x="69.95" textLength="7.32" lengthAdjust="spacingAndGlyphs">a</tspan><tspan x="77.65" textLength="8.22" lengthAdjust="spacingAndGlyphs">t</tspan><tspan x="85.96" textLength="7.94" lengthAdjust="spacingAndGlyphs">e</tspan> <tspan x="101.95" textLength="7.32" lengthAdjust="spacingAndGlyphs">a</tspan> <tspan x="118.76" textLength="7.74" lengthAdjust="spacingAndGlyphs">r</tspan><tspan x="125.96" textLength="7.94" lengthAdjust="spacingAndGlyphs">e</tspan><tspan x="133.95" textLength="7.32" lengthAdjust="spacingAndGlyphs">a</tspan><tspan x="141.91" textLength="7.84" lengthAdjust="spacingAndGlyphs">d</tspan><tspan x="149.96" textLength="7.94" lengthAdjust="spacingAndGlyphs">e</tspan><tspan x="158.76" textLength="7.74" lengthAdjust="spacingAndGlyphs">r</tspan> <tspan x="174.29" textLength="7.35" lengthAdjust="spacingAndGlyphs">f</tspan><tspan x="182.04" textLength="7.76" lengthAdjust="spacingAndGlyphs">o</tspan><tspan x="190.76" textLength="7.74" lengthAdjust="spacingAndGlyphs">r</tspan> <tspan x="205.95" textLength="7.32" lengthAdjust="spacingAndGlyphs">a</tspan> <tspan x="222.14" textLength="7.56" lengthAdjust="spacingAndGlyphs">v</tspan><tspan x="230.17" textLength="7.48" lengthAdjust="spacingAndGlyphs">i</tspan><tspan x="237.91" textLength="7.84" lengthAdjust="spacingAndGlyphs">d</tspan><tspan x="245.96" textLength="7.94" lengthAdjust="spacingAndGlyphs">e</tspan><tspan x="254.04" textLength="7.76" lengthAdjust="spacingAndGlyphs">o</tspan></text>
<text y="303.75" font-family="Liberation Mono" font-size="13.0" fill="#4665a2"><tspan x="22.24" textLength="7.74" lengthAdjust="spacingAndGlyphs">F</tspan><tspan x="30.24" textLength="7.74" lengthAdjust="spacingAndGlyphs">F</tspan><tspan x="38.06" textLength="7.81" lengthAdjust="spacingAndGlyphs">m</tspan><tspan x="46.07" textLength="7.84" lengthAdjust="spacingAndGlyphs">p</tspan><tspan x="53.96" textLength="7.94" lengthAdjust="spacingAndGlyphs">e</tspan><tspan x="61.88" textLength="7.84" lengthAdjust="spacingAndGlyphs">g</tspan><tspan x="69.93" textLength="8.15" lengthAdjust="spacingAndGlyphs">R</tspan><tspan x="77.96" textLength="7.94" lengthAdjust="spacingAndGlyphs">e</tspan><tspan x="85.95" textLength="7.32" lengthAdjust="spacingAndGlyphs">a</tspan><tspan x="93.91" textLength="7.84" lengthAdjust="spacingAndGlyphs">d</tspan><tspan x="101.96" textLength="7.94" lengthAdjust="spacingAndGlyphs">e</tspan><tspan x="110.76" textLength="7.74" lengthAdjust="spacingAndGlyphs">r</tspan></text>
<text y="303.75" font-family="Liberation Mono" font-size="13.0" fill="#000000"><tspan x="126.76" textLength="7.74" lengthAdjust="spacingAndGlyphs">r</tspan><tspan x="134.63" textLength="7.03" lengthAdjust="spacingAndGlyphs">(</tspan></text>
<text y="303.75" font-family="Liberation Mono" font-size="13.0" fill="#002080"><tspan x="142.42" textLength="6.99" lengthAdjust="spacingAndGlyphs">&quot;</tspan><tspan x="149.79" textLength="8.23" lengthAdjust="spacingAndGlyphs">M</tspan><tspan x="158.19" textLength="7.60" lengthAdjust="spacingAndGlyphs">y</tspan><tspan x="166.15" textLength="7.54" lengthAdjust="spacingAndGlyphs">A</tspan><tspan x="173.92" textLength="7.98" lengthAdjust="spacingAndGlyphs">w</tspan><tspan x="181.96" textLength="7.94" lengthAdjust="spacingAndGlyphs">e</tspan><tspan x="190.25" textLength="7.40" lengthAdjust="spacingAndGlyphs">s</tspan><tspan x="198.04" textLength="7.76" lengthAdjust="spacingAndGlyphs">o</tspan><tspan x="206.06" textLength="7.81" lengthAdjust="spacingAndGlyphs">m</tspan><tspan x="213.96" textLength="7.94" lengthAdjust="spacingAndGlyphs">e</tspan><tspan x="222.19" textLength="7.46" lengthAdjust="spacingAndGlyphs">V</tspan><tspan x="230.17" textLength="7.48" lengthAdjust="spacingAndGlyphs">i</tspan><tspan x="237.91" textLength="7.84" lengthAdjust="spacingAndGlyphs">d</tspan><tspan x="245.96" textLength="7.94" lengthAdjust="spacingAndGlyphs">e</tspan><tspan x="254.04" textLength="7.76" lengthAdjust="spacingAndGlyphs">o</tspan><tspan x="261.84" textLength="8.14" lengthAdjust="spacingAndGlyphs">.</tspan><tspan x="269.92" textLength="7.98" lengthAdjust="spacingAndGlyphs">w</tspan><tspan x="277.96" textLength="7.94" lengthAdjust="spacingAndGlyphs">e</tspan><tspan x="286.09" textLength="7.84" lengthAdjust="spacingAndGlyphs">b</tspan><tspan x="294.06" textLength="7.81" lengthAdjust="spacingAndGlyphs">m</tspan><tspan x="302.42" textLength="6.99" lengthAdjust="spacingAndGlyphs">&quot;</tspan></text>
<text y="303.75" font-family="Liberation Mono" font-size="13.0" fill="#000000"><tspan x="310.17" textLength="7.03" lengthAdjust="spacingAndGlyphs">)</tspan><tspan x="318.47" textLength="6.91" lengthAdjust="spacingAndGlyphs">;</tspan></text>
<text y="316.75" font-family="Liberation Mono" font-size="13.0" fill="#000000"><tspan x="22.76" textLength="7.74" lengthAdjust="spacingAndGlyphs">r</tspan><tspan x="29.84" textLength="8.14" lengthAdjust="spacingAndGlyphs">.</tspan><tspan x="38.07" textLength="7.69" lengthAdjust="spacingAndGlyphs">O</tspan><tspan x="46.07" textLength="7.84" lengthAdjust="spacingAndGlyphs">p</tspan><tspan x="53.96" textLength="7.94" lengthAdjust="spacingAndGlyphs">e</tspan><tspan x="62.09" textLength="7.73" lengthAdjust="spacingAndGlyphs">n</tspan><tspan x="70.63" textLength="7.03" lengthAdjust="spacingAndGlyphs">(</tspan><tspan x="78.17" textLength="7.03" lengthAdjust="spacingAndGlyphs">)</tspan><tspan x="86.47" textLength="6.91" lengthAdjust="spacingAndGlyphs">;</tspan></text>
<text y="316.75" font-family="Liberation Mono" font-size="13.0" fill="#800000"><tspan x="101.91" textLength="7.70" lengthAdjust="spacingAndGlyphs">/</tspan><tspan x="109.91" textLength="7.70" lengthAdjust="spacingAndGlyphs">/</tspan> <tspan x="126.07" textLength="7.69" lengthAdjust="spacingAndGlyphs">O</tspan><tspan x="134.07" textLength="7.84" lengthAdjust="spacingAndGlyphs">p</tspan><tspan x="141.96" textLength="7.94" lengthAdjust="spacingAndGlyphs">e</tspan><tspan x="150.09" textLength="7.73" lengthAdjust="spacingAndGlyphs">n</tspan> <tspan x="165.65" textLength="8.22" lengthAdjust="spacingAndGlyphs">t</tspan><tspan x="174.06" textLength="7.76" lengthAdjust="spacingAndGlyphs">h</tspan><tspan x="181.96" textLength="7.94" lengthAdjust="spacingAndGlyphs">e</tspan> <tspan x="198.76" textLength="7.74" lengthAdjust="spacingAndGlyphs">r</tspan><tspan x="205.96" textLength="7.94" lengthAdjust="spacingAndGlyphs">e</tspan><tspan x="213.95" textLength="7.32" lengthAdjust="spacingAndGlyphs">a</tspan><tspan x="221.91" textLength="7.84" lengthAdjust="spacingAndGlyphs">d</tspan><tspan x="229.96" textLength="7.94" lengthAdjust="spacingAndGlyphs">e</tspan><tspan x="238.76" textLength="7.74" lengthAdjust="spacingAndGlyphs">r</tspan></text>
<text y="342.75" font-family="Liberation Mono" font-size="13.0" fill="#800000"><tspan x="21.91" textLength="7.70" lengthAdjust="spacingAndGlyphs">/</tspan><tspan x="29.91" textLength="7.70" lengthAdjust="spacingAndGlyphs">/</tspan> <tspan x="45.94" textLength="7.86" lengthAdjust="spacingAndGlyphs">G</tspan><tspan x="53.96" textLength="7.94" lengthAdjust="spacingAndGlyphs">e</tspan><tspan x="61.65" textLength="8.22" lengthAdjust="spacingAndGlyphs">t</tspan> <tspan x="78.29" textLength="7.35" lengthAdjust="spacingAndGlyphs">f</tspan><tspan x="86.76" textLength="7.74" lengthAdjust="spacingAndGlyphs">r</tspan><tspan x="93.95" textLength="7.32" lengthAdjust="spacingAndGlyphs">a</tspan><tspan x="102.06" textLength="7.81" lengthAdjust="spacingAndGlyphs">m</tspan><tspan x="109.96" textLength="7.94" lengthAdjust="spacingAndGlyphs">e</tspan> <tspan x="126.09" textLength="7.73" lengthAdjust="spacingAndGlyphs">n</tspan><tspan x="134.06" textLength="7.73" lengthAdjust="spacingAndGlyphs">u</tspan><tspan x="142.06" textLength="7.81" lengthAdjust="spacingAndGlyphs">m</tspan><tspan x="150.09" textLength="7.84" lengthAdjust="spacingAndGlyphs">b</tspan><tspan x="157.96" textLength="7.94" lengthAdjust="spacingAndGlyphs">e</tspan><tspan x="166.76" textLength="7.74" lengthAdjust="spacingAndGlyphs">r</tspan> <tspan x="182.53" textLength="7.16" lengthAdjust="spacingAndGlyphs">1</tspan> <tspan x="198.29" textLength="7.35" lengthAdjust="spacingAndGlyphs">f</tspan><tspan x="206.76" textLength="7.74" lengthAdjust="spacingAndGlyphs">r</tspan><tspan x="214.04" textLength="7.76" lengthAdjust="spacingAndGlyphs">o</tspan><tspan x="222.06" textLength="7.81" lengthAdjust="spacingAndGlyphs">m</tspan> <tspan x="237.65" textLength="8.22" lengthAdjust="spacingAndGlyphs">t</tspan><tspan x="246.06" textLength="7.76" lengthAdjust="spacingAndGlyphs">h</tspan><tspan x="253.96" textLength="7.94" lengthAdjust="spacingAndGlyphs">e</tspan> <tspan x="270.14" textLength="7.56" lengthAdjust="spacingAndGlyphs">v</tspan><tspan x="278.17" textLength="7.48" lengthAdjust="spacingAndGlyphs">i</tspan><tspan x="285.91" textLength="7.84" lengthAdjust="spacingAndGlyphs">d</tspan><tspan x="293.96" textLength="7.94" lengthAdjust="spacingAndGlyphs">e</tspan><tspan x="302.04" textLength="7.76" lengthAdjust="spacingAndGlyphs">o</tspan></text>
<text y="355.75" font-family="Liberation Mono" font-size="13.0" fill="#000000"><tspan x="21.65" textLength="8.22" lengthAdjust="spacingAndGlyphs">t</tspan><tspan x="30.76" textLength="7.74" lengthAdjust="spacingAndGlyphs">r</tspan><tspan x="38.53" textLength="7.16" lengthAdjust="spacingAndGlyphs">1</tspan><tspan x="45.84" textLength="8.14" lengthAdjust="spacingAndGlyphs">:</tspan><tspan x="53.84" textLength="8.14" lengthAdjust="spacingAndGlyphs">:</tspan><tspan x="62.25" textLength="7.40" lengthAdjust="spacingAndGlyphs">s</tspan><tspan x="70.06" textLength="7.76" lengthAdjust="spacingAndGlyphs">h</tspan><tspan x="77.95" textLength="7.32" lengthAdjust="spacingAndGlyphs">a</tspan><tspan x="86.76" textLength="7.74" lengthAdjust="spacingAndGlyphs">r</tspan><tspan x="93.96" textLength="7.94" lengthAdjust="spacingAndGlyphs">e</tspan><tspan x="101.91" textLength="7.84" lengthAdjust="spacingAndGlyphs">d</tspan><tspan x="110.03" textLength="7.78" lengthAdjust="spacingAndGlyphs">_</tspan><tspan x="118.07" textLength="7.84" lengthAdjust="spacingAndGlyphs">p</tspan><tspan x="125.65" textLength="8.22" lengthAdjust="spacingAndGlyphs">t</tspan><tspan x="134.76" textLength="7.74" lengthAdjust="spacingAndGlyphs">r</tspan><tspan x="141.87" textLength="8.09" lengthAdjust="spacingAndGlyphs">&lt;</tspan><tspan x="150.24" textLength="7.74" lengthAdjust="spacingAndGlyphs">F</tspan><tspan x="158.76" textLength="7.74" lengthAdjust="spacingAndGlyphs">r</tspan><tspan x="165.95" textLength="7.32" lengthAdjust="spacingAndGlyphs">a</tspan><tspan x="174.06" textLength="7.81" lengthAdjust="spacingAndGlyphs">m</tspan><tspan x="181.96" textLength="7.94" lengthAdjust="spacingAndGlyphs">e</tspan><tspan x="189.87" textLength="8.09" lengthAdjust="spacingAndGlyphs">&gt;</tspan> <tspan x="206.29" textLength="7.35" lengthAdjust="spacingAndGlyphs">f</tspan> <tspan x="221.87" textLength="8.09" lengthAdjust="spacingAndGlyphs">=</tspan> <tspan x="238.76" textLength="7.74" lengthAdjust="spacingAndGlyphs">r</tspan><tspan x="245.84" textLength="8.14" lengthAdjust="spacingAndGlyphs">.</tspan><tspan x="253.94" textLength="7.86" lengthAdjust="spacingAndGlyphs">G</tspan><tspan x="261.96" textLength="7.94" lengthAdjust="spacingAndGlyphs">e</tspan><tspan x="269.65" textLength="8.22" lengthAdjust="spacingAndGlyphs">t</tspan><tspan x="278.24" textLength="7.74" lengthAdjust="spacingAndGlyphs">F</tspan><tspan x="286.76" textLength="7.74" lengthAdjust="spacingAndGlyphs">r</tspan><tspan x="293.95" textLength="7.32" lengthAdjust="spacingAndGlyphs">a</tspan><tspan x="302.06" textLength="7.81" lengthAdjust="spacingAndGlyphs">m</tspan><tspan x="309.96" textLength="7.94" lengthAdjust="spacingAndGlyphs">e</tspan><tspan x="318.63" textLength="7.03" lengthAdjust="spacingAndGlyphs">(</tspan><tspan x="326.53" textLength="7.16" lengthAdjust="spacingAndGlyphs">1</tspan><tspan x="334.17" textLength="7.03" lengthAdjust="spacingAndGlyphs">)</tspan><tspan x="342.47" textLength="6.91" lengthAdjust="spacingAndGlyphs">;</tspan></text>
<text y="381.75" font-family="Liberation Mono" font-size="13.0" fill="#800000"><tspan x="21.91" textLength="7.70" lengthAdjust="spacingAndGlyphs">/</tspan><tspan x="29.91" textLength="7.70" lengthAdjust="spacingAndGlyphs">/</tspan> <tspan x="45.88" textLength="8.07" lengthAdjust="spacingAndGlyphs">N</tspan><tspan x="54.04" textLength="7.76" lengthAdjust="spacingAndGlyphs">o</tspan><tspan x="61.92" textLength="7.98" lengthAdjust="spacingAndGlyphs">w</tspan> <tspan x="77.65" textLength="8.22" lengthAdjust="spacingAndGlyphs">t</tspan><tspan x="86.06" textLength="7.76" lengthAdjust="spacingAndGlyphs">h</tspan><tspan x="93.95" textLength="7.32" lengthAdjust="spacingAndGlyphs">a</tspan><tspan x="101.65" textLength="8.22" lengthAdjust="spacingAndGlyphs">t</tspan> <tspan x="117.92" textLength="7.98" lengthAdjust="spacingAndGlyphs">w</tspan><tspan x="125.96" textLength="7.94" lengthAdjust="spacingAndGlyphs">e</tspan> <tspan x="142.06" textLength="7.76" lengthAdjust="spacingAndGlyphs">h</tspan><tspan x="149.95" textLength="7.32" lengthAdjust="spacingAndGlyphs">a</tspan><tspan x="158.14" textLength="7.56" lengthAdjust="spacingAndGlyphs">v</tspan><tspan x="165.96" textLength="7.94" lengthAdjust="spacingAndGlyphs">e</tspan> <tspan x="181.95" textLength="7.32" lengthAdjust="spacingAndGlyphs">a</tspan><tspan x="190.09" textLength="7.73" lengthAdjust="spacingAndGlyphs">n</tspan> <tspan x="206.04" textLength="7.76" lengthAdjust="spacingAndGlyphs">o</tspan><tspan x="214.07" textLength="7.84" lengthAdjust="spacingAndGlyphs">p</tspan><tspan x="221.96" textLength="7.94" lengthAdjust="spacingAndGlyphs">e</tspan><tspan x="230.09" textLength="7.73" lengthAdjust="spacingAndGlyphs">n</tspan><tspan x="238.25" textLength="7.40" lengthAdjust="spacingAndGlyphs">s</tspan><tspan x="246.06" textLength="7.76" lengthAdjust="spacingAndGlyphs">h</tspan><tspan x="254.04" textLength="7.76" lengthAdjust="spacingAndGlyphs">o</tspan><tspan x="261.65" textLength="8.22" lengthAdjust="spacingAndGlyphs">t</tspan><tspan x="269.84" textLength="8.14" lengthAdjust="spacingAndGlyphs">:</tspan><tspan x="277.84" textLength="8.14" lengthAdjust="spacingAndGlyphs">:</tspan><tspan x="286.24" textLength="7.74" lengthAdjust="spacingAndGlyphs">F</tspan><tspan x="294.76" textLength="7.74" lengthAdjust="spacingAndGlyphs">r</tspan><tspan x="301.95" textLength="7.32" lengthAdjust="spacingAndGlyphs">a</tspan><tspan x="310.06" textLength="7.81" lengthAdjust="spacingAndGlyphs">m</tspan><tspan x="317.96" textLength="7.94" lengthAdjust="spacingAndGlyphs">e</tspan> <tspan x="334.04" textLength="7.76" lengthAdjust="spacingAndGlyphs">o</tspan><tspan x="342.09" textLength="7.84" lengthAdjust="spacingAndGlyphs">b</tspan><tspan x="350.36" textLength="7.01" lengthAdjust="spacingAndGlyphs">j</tspan><tspan x="357.96" textLength="7.94" lengthAdjust="spacingAndGlyphs">e</tspan><tspan x="366.35" textLength="7.39" lengthAdjust="spacingAndGlyphs">c</tspan><tspan x="373.65" textLength="8.22" lengthAdjust="spacingAndGlyphs">t</tspan><tspan x="383.00" textLength="6.91" lengthAdjust="spacingAndGlyphs">,</tspan> <tspan x="397.32" textLength="7.94" lengthAdjust="spacingAndGlyphs">l</tspan><tspan x="405.96" textLength="7.94" lengthAdjust="spacingAndGlyphs">e</tspan><tspan x="413.65" textLength="8.22" lengthAdjust="spacingAndGlyphs">t</tspan><tspan x="422.25" textLength="7.40" lengthAdjust="spacingAndGlyphs">s</tspan> <tspan x="438.06" textLength="7.76" lengthAdjust="spacingAndGlyphs">h</tspan><tspan x="445.95" textLength="7.32" lengthAdjust="spacingAndGlyphs">a</tspan><tspan x="454.14" textLength="7.56" lengthAdjust="spacingAndGlyphs">v</tspan><tspan x="461.96" textLength="7.94" lengthAdjust="spacingAndGlyphs">e</tspan> <tspan x="478.25" textLength="7.40" lengthAdjust="spacingAndGlyphs">s</tspan><tspan x="486.04" textLength="7.76" lengthAdjust="spacingAndGlyphs">o</tspan><tspan x="494.06" textLength="7.81" lengthAdjust="spacingAndGlyphs">m</tspan><tspan x="501.96" textLength="7.94" lengthAdjust="spacingAndGlyphs">e</tspan> <tspan x="518.29" textLength="7.35" lengthAdjust="spacingAndGlyphs">f</tspan><tspan x="526.06" textLength="7.73" lengthAdjust="spacingAndGlyphs">u</tspan><tspan x="534.09" textLength="7.73" lengthAdjust="spacingAndGlyphs">n</tspan><tspan x="541.96" textLength="7.92" lengthAdjust="spacingAndGlyphs">!</tspan></text>
<text y="394.75" font-family="Liberation Mono" font-size="13.0" fill="#000000"><tspan x="22.29" textLength="7.35" lengthAdjust="spacingAndGlyphs">f</tspan><tspan x="30.18" textLength="7.48" lengthAdjust="spacingAndGlyphs">-</tspan><tspan x="37.87" textLength="8.09" lengthAdjust="spacingAndGlyphs">&gt;</tspan><tspan x="45.85" textLength="7.83" lengthAdjust="spacingAndGlyphs">D</tspan><tspan x="54.17" textLength="7.48" lengthAdjust="spacingAndGlyphs">i</tspan><tspan x="62.25" textLength="7.40" lengthAdjust="spacingAndGlyphs">s</tspan><tspan x="70.07" textLength="7.84" lengthAdjust="spacingAndGlyphs">p</tspan><tspan x="77.32" textLength="7.94" lengthAdjust="spacingAndGlyphs">l</tspan><tspan x="85.95" textLength="7.32" lengthAdjust="spacingAndGlyphs">a</tspan><tspan x="94.19" textLength="7.60" lengthAdjust="spacingAndGlyphs">y</tspan><tspan x="102.63" textLength="7.03" lengthAdjust="spacingAndGlyphs">(</tspan><tspan x="110.17" textLength="7.03" lengthAdjust="spacingAndGlyphs">)</tspan><tspan x="118.47" textLength="6.91" lengthAdjust="spacingAndGlyphs">;</tspan></text>
<text y="394.75" font-family="Liberation Mono" font-size="13.0" fill="#800000"><tspan x="133.91" textLength="7.70" lengthAdjust="spacingAndGlyphs">/</tspan><tspan x="141.91" textLength="7.70" lengthAdjust="spacingAndGlyphs">/</tspan> <tspan x="157.85" textLength="7.83" lengthAdjust="spacingAndGlyphs">D</tspan><tspan x="166.17" textLength="7.48" lengthAdjust="spacingAndGlyphs">i</tspan><tspan x="174.25" textLength="7.40" lengthAdjust="spacingAndGlyphs">s</tspan><tspan x="182.07" textLength="7.84" lengthAdjust="spacingAndGlyphs">p</tspan><tspan x="189.32" textLength="7.94" lengthAdjust="spacingAndGlyphs">l</tspan><tspan x="197.95" textLength="7.32" lengthAdjust="spacingAndGlyphs">a</tspan><tspan x="206.19" textLength="7.60" lengthAdjust="spacingAndGlyphs">y</tspan> <tspan x="221.65" textLength="8.22" lengthAdjust="spacingAndGlyphs">t</tspan><tspan x="230.06" textLength="7.76" lengthAdjust="spacingAndGlyphs">h</tspan><tspan x="237.96" textLength="7.94" lengthAdjust="spacingAndGlyphs">e</tspan> <tspan x="254.29" textLength="7.35" lengthAdjust="spacingAndGlyphs">f</tspan><tspan x="262.76" textLength="7.74" lengthAdjust="spacingAndGlyphs">r</tspan><tspan x="269.95" textLength="7.32" lengthAdjust="spacingAndGlyphs">a</tspan><tspan x="278.06" textLength="7.81" lengthAdjust="spacingAndGlyphs">m</tspan><tspan x="285.96" textLength="7.94" lengthAdjust="spacingAndGlyphs">e</tspan> <tspan x="302.04" textLength="7.76" lengthAdjust="spacingAndGlyphs">o</tspan><tspan x="310.09" textLength="7.73" lengthAdjust="spacingAndGlyphs">n</tspan> <tspan x="325.65" textLength="8.22" lengthAdjust="spacingAndGlyphs">t</tspan><tspan x="334.06" textLength="7.76" lengthAdjust="spacingAndGlyphs">h</tspan><tspan x="341.96" textLength="7.94" lengthAdjust="spacingAndGlyphs">e</tspan> <tspan x="358.25" textLength="7.40" lengthAdjust="spacingAndGlyphs">s</tspan><tspan x="366.35" textLength="7.39" lengthAdjust="spacingAndGlyphs">c</tspan><tspan x="374.76" textLength="7.74" lengthAdjust="spacingAndGlyphs">r</tspan><tspan x="381.96" textLength="7.94" lengthAdjust="spacingAndGlyphs">e</tspan><tspan x="389.96" textLength="7.94" lengthAdjust="spacingAndGlyphs">e</tspan><tspan x="398.09" textLength="7.73" lengthAdjust="spacingAndGlyphs">n</tspan></text>
<text y="407.75" font-family="Liberation Mono" font-size="13.0" fill="#000000"><tspan x="22.29" textLength="7.35" lengthAdjust="spacingAndGlyphs">f</tspan><tspan x="30.18" textLength="7.48" lengthAdjust="spacingAndGlyphs">-</tspan><tspan x="37.87" textLength="8.09" lengthAdjust="spacingAndGlyphs">&gt;</tspan><tspan x="45.85" textLength="7.83" lengthAdjust="spacingAndGlyphs">D</tspan><tspan x="54.17" textLength="7.48" lengthAdjust="spacingAndGlyphs">i</tspan><tspan x="62.25" textLength="7.40" lengthAdjust="spacingAndGlyphs">s</tspan><tspan x="70.07" textLength="7.84" lengthAdjust="spacingAndGlyphs">p</tspan><tspan x="77.32" textLength="7.94" lengthAdjust="spacingAndGlyphs">l</tspan><tspan x="85.95" textLength="7.32" lengthAdjust="spacingAndGlyphs">a</tspan><tspan x="94.19" textLength="7.60" lengthAdjust="spacingAndGlyphs">y</tspan><tspan x="102.01" textLength="7.82" lengthAdjust="spacingAndGlyphs">W</tspan><tspan x="109.95" textLength="7.32" lengthAdjust="spacingAndGlyphs">a</tspan><tspan x="118.14" textLength="7.56" lengthAdjust="spacingAndGlyphs">v</tspan><tspan x="125.96" textLength="7.94" lengthAdjust="spacingAndGlyphs">e</tspan><tspan x="134.29" textLength="7.35" lengthAdjust="spacingAndGlyphs">f</tspan><tspan x="142.04" textLength="7.76" lengthAdjust="spacingAndGlyphs">o</tspan><tspan x="150.76" textLength="7.74" lengthAdjust="spacingAndGlyphs">r</tspan><tspan x="158.06" textLength="7.81" lengthAdjust="spacingAndGlyphs">m</tspan><tspan x="166.63" textLength="7.03" lengthAdjust="spacingAndGlyphs">(</tspan><tspan x="174.17" textLength="7.03" lengthAdjust="spacingAndGlyphs">)</tspan><tspan x="182.47" textLength="6.91" lengthAdjust="spacingAndGlyphs">;</tspan></text>
<text y="407.75" font-family="Liberation Mono" font-size="13.0" fill="#800000"><tspan x="197.91" textLength="7.70" lengthAdjust="spacingAndGlyphs">/</tspan><tspan x="205.91" textLength="7.70" lengthAdjust="spacingAndGlyphs">/</tspan> <tspan x="221.85" textLength="7.83" lengthAdjust="spacingAndGlyphs">D</tspan><tspan x="230.17" textLength="7.48" lengthAdjust="spacingAndGlyphs">i</tspan><tspan x="238.25" textLength="7.40" lengthAdjust="spacingAndGlyphs">s</tspan><tspan x="246.07" textLength="7.84" lengthAdjust="spacingAndGlyphs">p</tspan><tspan x="253.32" textLength="7.94" lengthAdjust="spacingAndGlyphs">l</tspan><tspan x="261.95" textLength="7.32" lengthAdjust="spacingAndGlyphs">a</tspan><tspan x="270.19" textLength="7.60" lengthAdjust="spacingAndGlyphs">y</tspan> <tspan x="285.65" textLength="8.22" lengthAdjust="spacingAndGlyphs">t</tspan><tspan x="294.06" textLength="7.76" lengthAdjust="spacingAndGlyphs">h</tspan><tspan x="301.96" textLength="7.94" lengthAdjust="spacingAndGlyphs">e</tspan> <tspan x="317.95" textLength="7.32" lengthAdjust="spacingAndGlyphs">a</tspan><tspan x="326.06" textLength="7.73" lengthAdjust="spacingAndGlyphs">u</tspan><tspan x="333.91" textLength="7.84" lengthAdjust="spacingAndGlyphs">d</tspan><tspan x="342.17" textLength="7.48" lengthAdjust="spacingAndGlyphs">i</tspan><tspan x="350.04" textLength="7.76" lengthAdjust="spacingAndGlyphs">o</tspan> <tspan x="365.92" textLength="7.98" lengthAdjust="spacingAndGlyphs">w</tspan><tspan x="373.95" textLength="7.32" lengthAdjust="spacingAndGlyphs">a</tspan><tspan x="382.14" textLength="7.56" lengthAdjust="spacingAndGlyphs">v</tspan><tspan x="389.96" textLength="7.94" lengthAdjust="spacingAndGlyphs">e</tspan><tspan x="398.29" textLength="7.35" lengthAdjust="spacingAndGlyphs">f</tspan><tspan x="406.04" textLength="7.76" lengthAdjust="spacingAndGlyphs">o</tspan><tspan x="414.76" textLength="7.74" lengthAdjust="spacingAndGlyphs">r</tspan><tspan x="422.06" textLength="7.81" lengthAdjust="spacingAndGlyphs">m</tspan> <tspan x="437.95" textLength="7.32" lengthAdjust="spacingAndGlyphs">a</tspan><tspan x="446.25" textLength="7.40" lengthAdjust="spacingAndGlyphs">s</tspan> <tspan x="461.95" textLength="7.32" lengthAdjust="spacingAndGlyphs">a</tspan><tspan x="470.09" textLength="7.73" lengthAdjust="spacingAndGlyphs">n</tspan> <tspan x="486.17" textLength="7.48" lengthAdjust="spacingAndGlyphs">i</tspan><tspan x="494.06" textLength="7.81" lengthAdjust="spacingAndGlyphs">m</tspan><tspan x="501.95" textLength="7.32" lengthAdjust="spacingAndGlyphs">a</tspan><tspan x="509.88" textLength="7.84" lengthAdjust="spacingAndGlyphs">g</tspan><tspan x="517.96" textLength="7.94" lengthAdjust="spacingAndGlyphs">e</tspan></text>
<text y="420.75" font-family="Liberation Mono" font-size="13.0" fill="#000000"><tspan x="22.29" textLength="7.35" lengthAdjust="spacingAndGlyphs">f</tspan><tspan x="30.18" textLength="7.48" lengthAdjust="spacingAndGlyphs">-</tspan><tspan x="37.87" textLength="8.09" lengthAdjust="spacingAndGlyphs">&gt;</tspan><tspan x="46.21" textLength="7.74" lengthAdjust="spacingAndGlyphs">P</tspan><tspan x="53.32" textLength="7.94" lengthAdjust="spacingAndGlyphs">l</tspan><tspan x="61.95" textLength="7.32" lengthAdjust="spacingAndGlyphs">a</tspan><tspan x="70.19" textLength="7.60" lengthAdjust="spacingAndGlyphs">y</tspan><tspan x="78.63" textLength="7.03" lengthAdjust="spacingAndGlyphs">(</tspan><tspan x="86.17" textLength="7.03" lengthAdjust="spacingAndGlyphs">)</tspan><tspan x="94.47" textLength="6.91" lengthAdjust="spacingAndGlyphs">;</tspan></text>
<text y="420.75" font-family="Liberation Mono" font-size="13.0" fill="#800000"><tspan x="109.91" textLength="7.70" lengthAdjust="spacingAndGlyphs">/</tspan><tspan x="117.91" textLength="7.70" lengthAdjust="spacingAndGlyphs">/</tspan> <tspan x="134.21" textLength="7.74" lengthAdjust="spacingAndGlyphs">P</tspan><tspan x="141.32" textLength="7.94" lengthAdjust="spacingAndGlyphs">l</tspan><tspan x="149.95" textLength="7.32" lengthAdjust="spacingAndGlyphs">a</tspan><tspan x="158.19" textLength="7.60" lengthAdjust="spacingAndGlyphs">y</tspan> <tspan x="173.65" textLength="8.22" lengthAdjust="spacingAndGlyphs">t</tspan><tspan x="182.06" textLength="7.76" lengthAdjust="spacingAndGlyphs">h</tspan><tspan x="189.96" textLength="7.94" lengthAdjust="spacingAndGlyphs">e</tspan> <tspan x="205.95" textLength="7.32" lengthAdjust="spacingAndGlyphs">a</tspan><tspan x="214.06" textLength="7.73" lengthAdjust="spacingAndGlyphs">u</tspan><tspan x="221.91" textLength="7.84" lengthAdjust="spacingAndGlyphs">d</tspan><tspan x="230.17" textLength="7.48" lengthAdjust="spacingAndGlyphs">i</tspan><tspan x="238.04" textLength="7.76" lengthAdjust="spacingAndGlyphs">o</tspan> <tspan x="253.65" textLength="8.22" lengthAdjust="spacingAndGlyphs">t</tspan><tspan x="262.06" textLength="7.76" lengthAdjust="spacingAndGlyphs">h</tspan><tspan x="270.76" textLength="7.74" lengthAdjust="spacingAndGlyphs">r</tspan><tspan x="278.04" textLength="7.76" lengthAdjust="spacingAndGlyphs">o</tspan><tspan x="286.06" textLength="7.73" lengthAdjust="spacingAndGlyphs">u</tspan><tspan x="293.88" textLength="7.84" lengthAdjust="spacingAndGlyphs">g</tspan><tspan x="302.06" textLength="7.76" lengthAdjust="spacingAndGlyphs">h</tspan> <tspan x="318.19" textLength="7.60" lengthAdjust="spacingAndGlyphs">y</tspan><tspan x="326.04" textLength="7.76" lengthAdjust="spacingAndGlyphs">o</tspan><tspan x="334.06" textLength="7.73" lengthAdjust="spacingAndGlyphs">u</tspan><tspan x="342.76" textLength="7.74" lengthAdjust="spacingAndGlyphs">r</tspan> <tspan x="358.25" textLength="7.40" lengthAdjust="spacingAndGlyphs">s</tspan><tspan x="366.07" textLength="7.84" lengthAdjust="spacingAndGlyphs">p</tspan><tspan x="373.96" textLength="7.94" lengthAdjust="spacingAndGlyphs">e</tspan><tspan x="381.95" textLength="7.32" lengthAdjust="spacingAndGlyphs">a</tspan><tspan x="390.02" textLength="8.21" lengthAdjust="spacingAndGlyphs">k</tspan><tspan x="397.96" textLength="7.94" lengthAdjust="spacingAndGlyphs">e</tspan><tspan x="406.76" textLength="7.74" lengthAdjust="spacingAndGlyphs">r</tspan></text>
<text y="446.75" font-family="Liberation Mono" font-size="13.0" fill="#800000"><tspan x="21.91" textLength="7.70" lengthAdjust="spacingAndGlyphs">/</tspan><tspan x="29.91" textLength="7.70" lengthAdjust="spacingAndGlyphs">/</tspan> <tspan x="46.08" textLength="7.37" lengthAdjust="spacingAndGlyphs">C</tspan><tspan x="53.32" textLength="7.94" lengthAdjust="spacingAndGlyphs">l</tspan><tspan x="62.04" textLength="7.76" lengthAdjust="spacingAndGlyphs">o</tspan><tspan x="70.25" textLength="7.40" lengthAdjust="spacingAndGlyphs">s</tspan><tspan x="77.96" textLength="7.94" lengthAdjust="spacingAndGlyphs">e</tspan> <tspan x="93.65" textLength="8.22" lengthAdjust="spacingAndGlyphs">t</tspan><tspan x="102.06" textLength="7.76" lengthAdjust="spacingAndGlyphs">h</tspan><tspan x="109.96" textLength="7.94" lengthAdjust="spacingAndGlyphs">e</tspan> <tspan x="126.76" textLength="7.74" lengthAdjust="spacingAndGlyphs">r</tspan><tspan x="133.96" textLength="7.94" lengthAdjust="spacingAndGlyphs">e</tspan><tspan x="141.95" textLength="7.32" lengthAdjust="spacingAndGlyphs">a</tspan><tspan x="149.91" textLength="7.84" lengthAdjust="spacingAndGlyphs">d</tspan><tspan x="157.96" textLength="7.94" lengthAdjust="spacingAndGlyphs">e</tspan><tspan x="166.76" textLength="7.74" lengthAdjust="spacingAndGlyphs">r</tspan></text>
<text y="459.75" font-family="Liberation Mono" font-size="13.0" fill="#000000"><tspan x="22.76" textLength="7.74" lengthAdjust="spacingAndGlyphs">r</tspan><tspan x="29.84" textLength="8.14" lengthAdjust="spacingAndGlyphs">.</tspan><tspan x="38.08" textLength="7.37" lengthAdjust="spacingAndGlyphs">C</tspan><tspan x="45.32" textLength="7.94" lengthAdjust="spacingAndGlyphs">l</tspan><tspan x="54.04" textLength="7.76" lengthAdjust="spacingAndGlyphs">o</tspan><tspan x="62.25" textLength="7.40" lengthAdjust="spacingAndGlyphs">s</tspan><tspan x="69.96" textLength="7.94" lengthAdjust="spacingAndGlyphs">e</tspan><tspan x="78.63" textLength="7.03" lengthAdjust="spacingAndGlyphs">(</tspan><tspan x="86.17" textLength="7.03" lengthAdjust="spacingAndGlyphs">)</tspan><tspan x="94.47" textLength="6.91" lengthAdjust="spacingAndGlyphs">;</tspan></text>
</svg>
</body></html>
